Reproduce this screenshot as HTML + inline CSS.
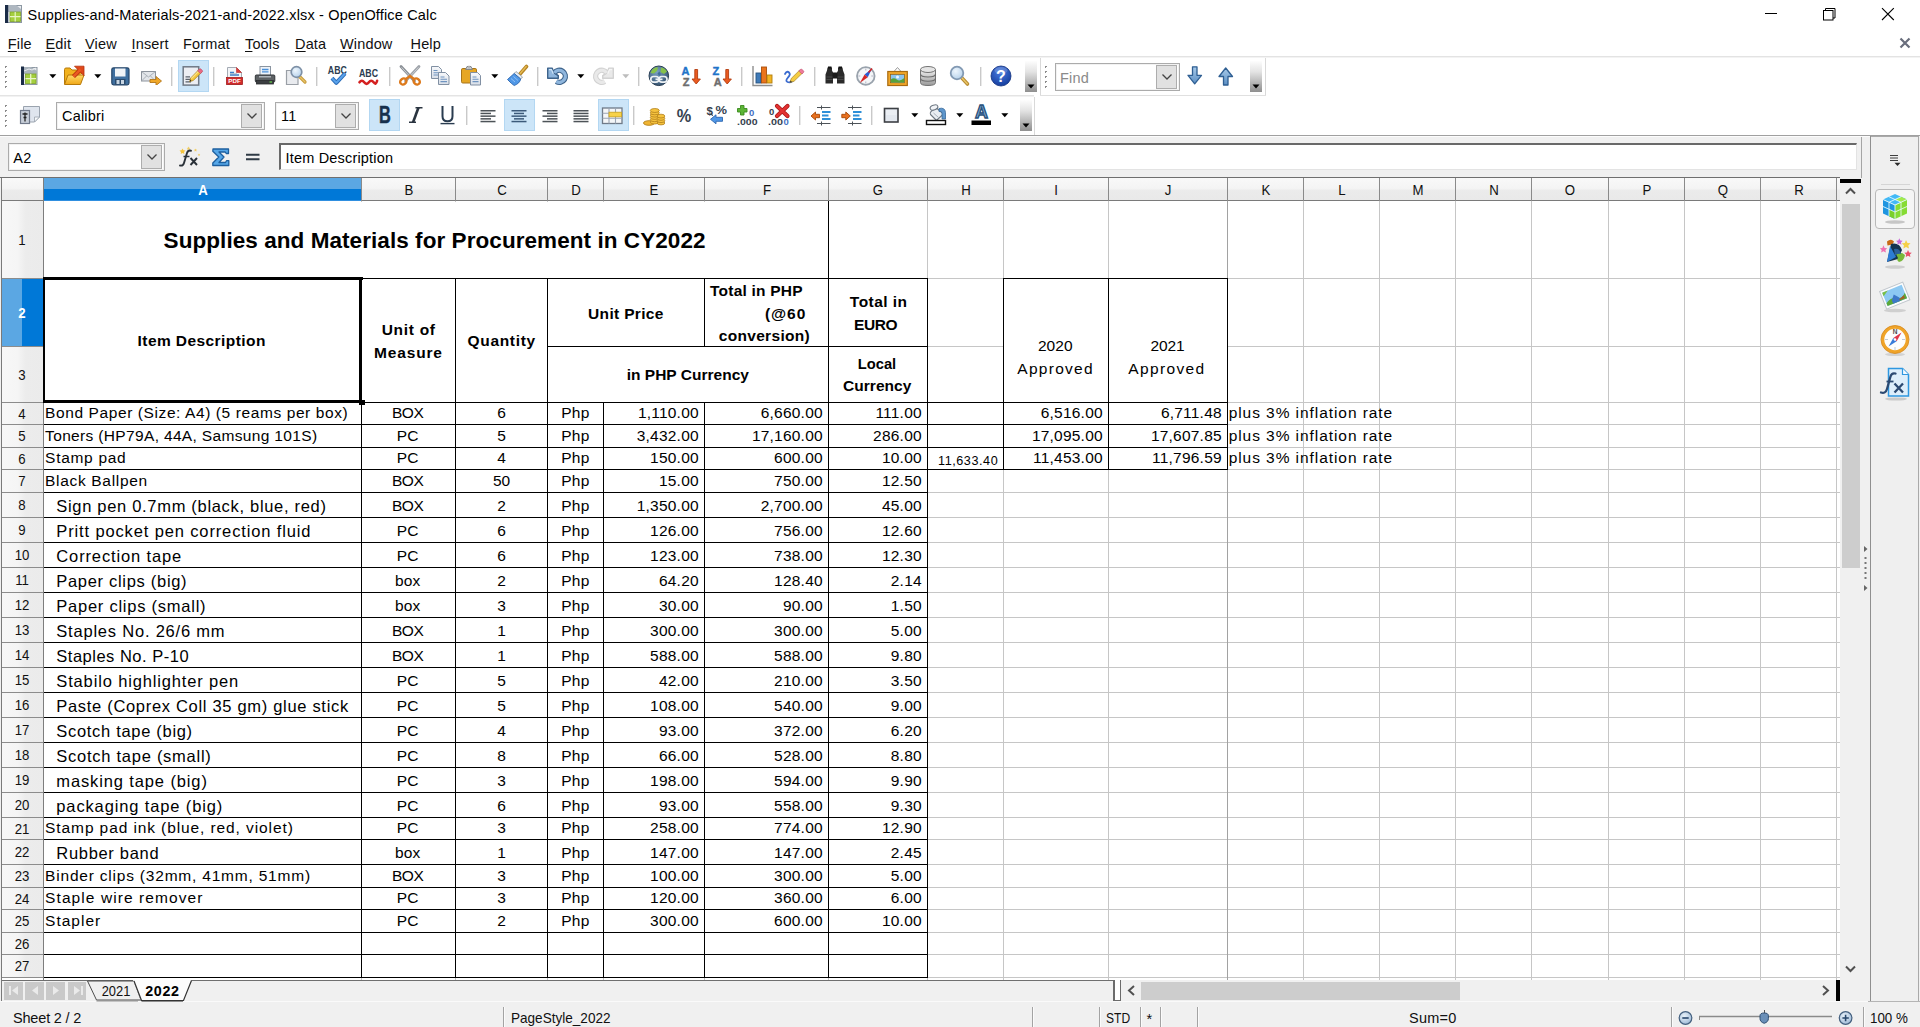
<!DOCTYPE html>
<html><head><meta charset="utf-8"><title>Supplies-and-Materials-2021-and-2022.xlsx - OpenOffice Calc</title><style>
html,body{margin:0;padding:0}
body{width:1920px;height:1027px;overflow:hidden;position:relative;background:#fff;font-family:'Liberation Sans',sans-serif}
body>div,body>svg,body>span{position:absolute}
.t{white-space:nowrap;line-height:0;height:0;display:block}
.t u{text-decoration:underline;text-underline-offset:1.5px;text-decoration-thickness:1px}
</style></head><body>
<div style="left:0px;top:0px;width:1920px;height:30px;background:#fff"></div>
<svg style="left:4px;top:4px" width="19" height="20" viewBox="0 0 19 20"><rect x="2.5" y="1.5" width="15" height="17" fill="#e9ecef" stroke="#8d98a3"/><polygon points="3,1 12,1 17,5 17,8 3,8" fill="#aeb7c0"/><rect x="1" y="1" width="3.2" height="18" fill="#1b2c47"/><rect x="6" y="8" width="10.5" height="9.5" fill="#a4cf3e" stroke="#7da02a" stroke-width=".8"/><path d="M11.2 8v9.5M6 12.7h10.5" stroke="#e9f5c8" stroke-width="1.2"/></svg>
<span class="t" style="left:27.6px;top:14.98px;font-size:14.5px;letter-spacing:0.166px;margin-right:-0.166px;">Supplies-and-Materials-2021-and-2022.xlsx - OpenOffice Calc</span>
<svg style="left:1760px;top:4px" width="140" height="22" viewBox="1760 4 140 22"><path d="M1765 13.5h12" stroke="#000" stroke-width="1"/><path d="M1825.5 10.5v-2h9.5v9.5h-2" fill="none" stroke="#000" stroke-width="1"/><rect x="1823.5" y="10.5" width="9.5" height="9.5" fill="#fff" stroke="#000" stroke-width="1"/><path d="M1882 8.2l11.8 11.8M1893.8 8.2l-11.8 11.8" stroke="#000" stroke-width="1.1"/></svg>
<span class="t" style="left:7.8px;top:43.58px;font-size:14.5px;color:#111;letter-spacing:0.15px;margin-right:-0.15px;"><u>F</u>ile</span>
<span class="t" style="left:45.5px;top:43.58px;font-size:14.5px;color:#111;letter-spacing:0.15px;margin-right:-0.15px;"><u>E</u>dit</span>
<span class="t" style="left:85px;top:43.58px;font-size:14.5px;color:#111;letter-spacing:0.15px;margin-right:-0.15px;"><u>V</u>iew</span>
<span class="t" style="left:131.5px;top:43.58px;font-size:14.5px;color:#111;letter-spacing:0.15px;margin-right:-0.15px;"><u>I</u>nsert</span>
<span class="t" style="left:183px;top:43.58px;font-size:14.5px;color:#111;letter-spacing:0.15px;margin-right:-0.15px;">F<u>o</u>rmat</span>
<span class="t" style="left:245px;top:43.58px;font-size:14.5px;color:#111;letter-spacing:0.15px;margin-right:-0.15px;"><u>T</u>ools</span>
<span class="t" style="left:295px;top:43.58px;font-size:14.5px;color:#111;letter-spacing:0.15px;margin-right:-0.15px;"><u>D</u>ata</span>
<span class="t" style="left:340px;top:43.58px;font-size:14.5px;color:#111;letter-spacing:0.15px;margin-right:-0.15px;"><u>W</u>indow</span>
<span class="t" style="left:410.5px;top:43.58px;font-size:14.5px;color:#111;letter-spacing:0.15px;margin-right:-0.15px;"><u>H</u>elp</span>
<svg style="left:1899px;top:37px" width="12" height="12" viewBox="0 0 12 12"><path d="M1.5 1.5l9 9M10.5 1.5l-9 9" stroke="#686d7c" stroke-width="2.2"/></svg>
<div style="left:0px;top:56px;width:1920px;height:1px;background:#e3e3e3"></div>
<div style="left:0px;top:57px;width:1920px;height:1px;background:#f3f3f3"></div>
<div style="left:0px;top:58px;width:1920px;height:77px;background:#fff"></div>
<div style="left:0px;top:95px;width:1034px;height:1px;background:#e4e4e4"></div>
<div style="left:0px;top:96px;width:1034px;height:1px;background:#f2f2f2"></div>
<div style="left:1040px;top:58px;width:1px;height:38px;background:#d9d9d9"></div>
<div style="left:1265px;top:58px;width:1px;height:38px;background:#d9d9d9"></div>
<div style="left:1040px;top:95px;width:226px;height:1px;background:#e0e0e0"></div>
<div style="left:1034px;top:97px;width:1px;height:38px;background:#d9d9d9"></div>
<div style="left:5px;top:66px;width:2px;height:2px;background:#8c8c8c"></div>
<div style="left:6px;top:67px;width:1px;height:1px;background:#fff"></div>
<div style="left:5px;top:71px;width:2px;height:2px;background:#8c8c8c"></div>
<div style="left:6px;top:72px;width:1px;height:1px;background:#fff"></div>
<div style="left:5px;top:76px;width:2px;height:2px;background:#8c8c8c"></div>
<div style="left:6px;top:77px;width:1px;height:1px;background:#fff"></div>
<div style="left:5px;top:81px;width:2px;height:2px;background:#8c8c8c"></div>
<div style="left:6px;top:82px;width:1px;height:1px;background:#fff"></div>
<div style="left:5px;top:86px;width:2px;height:2px;background:#8c8c8c"></div>
<div style="left:6px;top:87px;width:1px;height:1px;background:#fff"></div>
<div style="left:5px;top:105px;width:2px;height:2px;background:#8c8c8c"></div>
<div style="left:6px;top:106px;width:1px;height:1px;background:#fff"></div>
<div style="left:5px;top:110px;width:2px;height:2px;background:#8c8c8c"></div>
<div style="left:6px;top:111px;width:1px;height:1px;background:#fff"></div>
<div style="left:5px;top:115px;width:2px;height:2px;background:#8c8c8c"></div>
<div style="left:6px;top:116px;width:1px;height:1px;background:#fff"></div>
<div style="left:5px;top:120px;width:2px;height:2px;background:#8c8c8c"></div>
<div style="left:6px;top:121px;width:1px;height:1px;background:#fff"></div>
<div style="left:5px;top:125px;width:2px;height:2px;background:#8c8c8c"></div>
<div style="left:6px;top:126px;width:1px;height:1px;background:#fff"></div>
<div style="left:1045px;top:66px;width:2px;height:2px;background:#8c8c8c"></div>
<div style="left:1046px;top:67px;width:1px;height:1px;background:#fff"></div>
<div style="left:1045px;top:71px;width:2px;height:2px;background:#8c8c8c"></div>
<div style="left:1046px;top:72px;width:1px;height:1px;background:#fff"></div>
<div style="left:1045px;top:76px;width:2px;height:2px;background:#8c8c8c"></div>
<div style="left:1046px;top:77px;width:1px;height:1px;background:#fff"></div>
<div style="left:1045px;top:81px;width:2px;height:2px;background:#8c8c8c"></div>
<div style="left:1046px;top:82px;width:1px;height:1px;background:#fff"></div>
<div style="left:1045px;top:86px;width:2px;height:2px;background:#8c8c8c"></div>
<div style="left:1046px;top:87px;width:1px;height:1px;background:#fff"></div>
<div style="left:1025px;top:61px;width:12px;height:31px;background:linear-gradient(#fdfdfd 0%,#e3e3e3 35%,#a9a9a9 80%,#8f8f8f 100%)"></div>
<svg style="left:1027px;top:84px" width="8" height="5" viewBox="0 0 8 5"><polygon points="0.5,0.5 7.5,0.5 4,4.5" fill="#000"/></svg>
<div style="left:1250px;top:61px;width:12px;height:31px;background:linear-gradient(#fdfdfd 0%,#e3e3e3 35%,#a9a9a9 80%,#8f8f8f 100%)"></div>
<svg style="left:1252px;top:84px" width="8" height="5" viewBox="0 0 8 5"><polygon points="0.5,0.5 7.5,0.5 4,4.5" fill="#000"/></svg>
<div style="left:1020px;top:100px;width:12px;height:31px;background:linear-gradient(#fdfdfd 0%,#e3e3e3 35%,#a9a9a9 80%,#8f8f8f 100%)"></div>
<svg style="left:1022px;top:123px" width="8" height="5" viewBox="0 0 8 5"><polygon points="0.5,0.5 7.5,0.5 4,4.5" fill="#000"/></svg>
<div style="left:178px;top:60px;width:31px;height:32px;background:#cce5f8;border:1px solid #b3d7f2;box-sizing:border-box"></div>
<div style="left:369px;top:99px;width:31px;height:32px;background:#cce5f8;border:1px solid #b3d7f2;box-sizing:border-box"></div>
<div style="left:504px;top:99px;width:31px;height:32px;background:#cce5f8;border:1px solid #b3d7f2;box-sizing:border-box"></div>
<div style="left:598px;top:99px;width:31px;height:32px;background:#cce5f8;border:1px solid #b3d7f2;box-sizing:border-box"></div>
<div style="left:171px;top:67px;width:1px;height:19px;background:#c9c9c9"></div>
<div style="left:172px;top:67px;width:1px;height:19px;background:#e9e9e9"></div>
<div style="left:213px;top:67px;width:1px;height:19px;background:#c9c9c9"></div>
<div style="left:214px;top:67px;width:1px;height:19px;background:#e9e9e9"></div>
<div style="left:316px;top:67px;width:1px;height:19px;background:#c9c9c9"></div>
<div style="left:317px;top:67px;width:1px;height:19px;background:#e9e9e9"></div>
<div style="left:389px;top:67px;width:1px;height:19px;background:#c9c9c9"></div>
<div style="left:390px;top:67px;width:1px;height:19px;background:#e9e9e9"></div>
<div style="left:537px;top:67px;width:1px;height:19px;background:#c9c9c9"></div>
<div style="left:538px;top:67px;width:1px;height:19px;background:#e9e9e9"></div>
<div style="left:638px;top:67px;width:1px;height:19px;background:#c9c9c9"></div>
<div style="left:639px;top:67px;width:1px;height:19px;background:#e9e9e9"></div>
<div style="left:741px;top:67px;width:1px;height:19px;background:#c9c9c9"></div>
<div style="left:742px;top:67px;width:1px;height:19px;background:#e9e9e9"></div>
<div style="left:814px;top:67px;width:1px;height:19px;background:#c9c9c9"></div>
<div style="left:815px;top:67px;width:1px;height:19px;background:#e9e9e9"></div>
<div style="left:980px;top:67px;width:1px;height:19px;background:#c9c9c9"></div>
<div style="left:981px;top:67px;width:1px;height:19px;background:#e9e9e9"></div>
<div style="left:466px;top:106px;width:1px;height:19px;background:#c9c9c9"></div>
<div style="left:467px;top:106px;width:1px;height:19px;background:#e9e9e9"></div>
<div style="left:633px;top:106px;width:1px;height:19px;background:#c9c9c9"></div>
<div style="left:634px;top:106px;width:1px;height:19px;background:#e9e9e9"></div>
<div style="left:799px;top:106px;width:1px;height:19px;background:#c9c9c9"></div>
<div style="left:800px;top:106px;width:1px;height:19px;background:#e9e9e9"></div>
<div style="left:871px;top:106px;width:1px;height:19px;background:#c9c9c9"></div>
<div style="left:872px;top:106px;width:1px;height:19px;background:#e9e9e9"></div>
<div style="left:1055px;top:63px;width:125px;height:28px;background:#fff;border:1px solid #ababab;box-sizing:border-box;box-shadow:inset 0 0 0 1px #f2f2f2"></div>
<div style="left:1156px;top:65px;width:21px;height:24px;background:#e1e1e1;border:1px solid #adadad;box-sizing:border-box"></div>
<svg style="left:1160.5px;top:73.0px" width="12" height="8" viewBox="0 0 12 8"><path d="M1.5 1.5l4.5 4.5 4.5-4.5" fill="none" stroke="#444" stroke-width="1.3"/></svg>
<span class="t" style="left:1060px;top:77.98px;font-size:14.5px;color:#8a8a8a;letter-spacing:0.18px;margin-right:-0.18px;">Find</span>
<div style="left:56px;top:102px;width:209px;height:28px;background:#fff;border:1px solid #ababab;box-sizing:border-box;box-shadow:inset 0 0 0 1px #f2f2f2"></div>
<div style="left:241px;top:104px;width:21px;height:24px;background:#e1e1e1;border:1px solid #adadad;box-sizing:border-box"></div>
<svg style="left:245.5px;top:112.0px" width="12" height="8" viewBox="0 0 12 8"><path d="M1.5 1.5l4.5 4.5 4.5-4.5" fill="none" stroke="#444" stroke-width="1.3"/></svg>
<span class="t" style="left:62px;top:116.28px;font-size:14.5px;letter-spacing:0.18px;margin-right:-0.18px;">Calibri</span>
<div style="left:275px;top:102px;width:84px;height:28px;background:#fff;border:1px solid #ababab;box-sizing:border-box;box-shadow:inset 0 0 0 1px #f2f2f2"></div>
<div style="left:335px;top:104px;width:21px;height:24px;background:#e1e1e1;border:1px solid #adadad;box-sizing:border-box"></div>
<svg style="left:339.5px;top:112.0px" width="12" height="8" viewBox="0 0 12 8"><path d="M1.5 1.5l4.5 4.5 4.5-4.5" fill="none" stroke="#444" stroke-width="1.3"/></svg>
<span class="t" style="left:281px;top:116.28px;font-size:14.5px;letter-spacing:0.18px;margin-right:-0.18px;">11</span>
<svg style="left:0;top:0" width="0" height="0"><defs><linearGradient id="gFold" x1="0" y1="0" x2="0" y2="1"><stop offset="0" stop-color="#ffd968"/><stop offset="1" stop-color="#f0a818"/></linearGradient><linearGradient id="gBlue" x1="0" y1="0" x2="0" y2="1"><stop offset="0" stop-color="#a9cbea"/><stop offset="1" stop-color="#5b8fc4"/></linearGradient><linearGradient id="gPaper" x1="0" y1="0" x2="0" y2="1"><stop offset="0" stop-color="#f6f8fb"/><stop offset="1" stop-color="#d9dfe8"/></linearGradient><linearGradient id="gGray" x1="0" y1="0" x2="0" y2="1"><stop offset="0" stop-color="#f0f0f0"/><stop offset="1" stop-color="#9a9a9a"/></linearGradient><radialGradient id="gHelp" cx=".45" cy=".3" r=".75"><stop offset="0" stop-color="#4a7be0"/><stop offset="1" stop-color="#123a9a"/></radialGradient><radialGradient id="gGlobe" cx=".4" cy=".3" r=".8"><stop offset="0" stop-color="#7aa0c4"/><stop offset="1" stop-color="#2d4a66"/></radialGradient><radialGradient id="gLens" cx=".4" cy=".35" r=".7"><stop offset="0" stop-color="#eef6fd"/><stop offset="1" stop-color="#b4d0ea"/></radialGradient></defs></svg>
<svg style="left:20px;top:65px" width="19" height="21" viewBox="0 0 19 21"><rect x="2.5" y="2.5" width="14.5" height="17" fill="#e9ecef" stroke="#8d98a3"/><polygon points="3,2 11,2 17,6 17,9 3,9" fill="#aab4bd"/><path d="M4 6l5-2 3 1 4-2" stroke="#e9ecef" stroke-width="1" fill="none"/><rect x="1" y="1.5" width="3" height="18.5" fill="#1b2c47"/><rect x="5.5" y="9" width="10.5" height="9.5" fill="#a4cf3e" stroke="#7da02a" stroke-width=".8"/><path d="M10.7 9v9.5M5.5 13.7h10.5" stroke="#e9f5c8" stroke-width="1.3"/></svg>
<svg style="left:48.5px;top:74px" width="8" height="5" viewBox="0 0 8 5"><polygon points="0.3,0.3 7.3,0.3 3.8,4.2" fill="#000"/></svg>
<svg style="left:63px;top:65px" width="22" height="21" viewBox="0 0 22 21"><path d="M1.5 19V4.5q0-1.5 1.5-1.5h4l2 2h8q1.5 0 1.5 1.5V9" fill="#f2b21e" stroke="#b77a0a"/><path d="M1.5 19.5L5 10h16l-3.5 9.5z" fill="url(#gFold)" stroke="#b77a0a"/><path d="M10.500 11.500l7-7" stroke="#b5300c" stroke-width="4.200"/><polygon points="11.500,1.200 21,1.200 21,10.700" fill="#e0481a" stroke="#b5300c" stroke-width=".8" stroke-linejoin="round"/><path d="M10.500 11.500l7-7" stroke="#ea5a22" stroke-width="2.600"/></svg>
<svg style="left:93.5px;top:74px" width="8" height="5" viewBox="0 0 8 5"><polygon points="0.3,0.3 7.3,0.3 3.8,4.2" fill="#000"/></svg>
<svg style="left:111px;top:67px" width="19" height="19" viewBox="0 0 19 19"><rect x="0.8" y="0.8" width="17.2" height="17" rx="1.8" fill="#3f6f9f" stroke="#27476a" stroke-width="1.2"/><rect x="4" y="1.5" width="10.5" height="8" fill="#f1f4f7"/><rect x="4" y="12" width="10.5" height="5.5" fill="#2b4a6b"/><rect x="5.5" y="13" width="3" height="4" fill="#c9d6e3"/><rect x="10" y="13" width="3" height="4" fill="#c9d6e3"/></svg>
<svg style="left:140px;top:70px" width="23" height="15" viewBox="0 0 23 15"><rect x="1.5" y="1.5" width="14" height="9.5" fill="#e3e6ea" stroke="#8c939c"/><path d="M1.5 1.5l7 5.5 7-5.5M1.5 11l5-5M15.500 11l-5-5" fill="none" stroke="#a3a9b1" stroke-width=".9"/><path d="M10 9.5h6V6.5l5.5 4.5-5.500 4.5v-3h-6z" fill="#f0a828" stroke="#b3761a" stroke-width=".9"/></svg>
<svg style="left:182px;top:65px" width="23" height="22" viewBox="0 0 23 22"><rect x="1.200" y="1.800" width="15.500" height="18.300" fill="#eceef3" stroke="#707985" stroke-width="1.500"/><path d="M3.500 11.800h4.500M3.500 14.300h6.500M3.500 16.800h5.500" stroke="#59616c" stroke-width="1.300"/><g transform="translate(-.5,1.800)"><path d="M8.200 14.800l1-3.600L17.600 2.600l2.700 2.600-8.500 8.500z" fill="#f5c63a" stroke="#a8842a" stroke-width=".8"/><path d="M9.800 11.800l8.300-8.300" stroke="#fbe38a" stroke-width="1.200"/><path d="M16.200 4l1.600-1.700q.8-.8 1.700 0l1.200 1.200q.8.900 0 1.700L19 6.800z" fill="#ea6a86" stroke="#b84860" stroke-width=".6"/><path d="M8.200 14.800l.5-1.800 1.300 1.300z" fill="#222"/></g></svg>
<svg style="left:225px;top:66px" width="19" height="20" viewBox="0 0 19 20"><path d="M2.500 1.500h9l5 5v12h-14z" fill="#f2f4f7" stroke="#a4abb4"/><path d="M11.500 1.500v5h5z" fill="#dd3b3b" stroke="#b52a2a" stroke-width=".6"/><path d="M5 6.500h4M5 9h9" stroke="#3d7fc9" stroke-width="1.4"/><path d="M5 7.800h7" stroke="#9ab" stroke-width=".8"/><rect x="1.500" y="11.500" width="16" height="7" fill="#d22b2b" stroke="#a51f1f" stroke-width=".8"/><text x="9.500" y="17.300" text-anchor="middle" font-size="6.200" font-weight="700" fill="#fff" style="font-family:'Liberation Sans',sans-serif">PDF</text></svg>
<svg style="left:254px;top:65px" width="22" height="21" viewBox="0 0 22 21"><rect x="6" y="1.500" width="10.500" height="9" fill="#eef3f9" stroke="#8a94a0"/><path d="M8 4.500h6.500M8 6.800h6.500" stroke="#4a90d9" stroke-width="1.300"/><rect x="1.300" y="10" width="19.500" height="7" rx="1" fill="#5d6164" stroke="#33373a"/><rect x="2.500" y="15.500" width="17" height="3.500" fill="#3b3e41" stroke="#2b2d2f" stroke-width=".8"/><rect x="5" y="11" width="12" height="1.500" fill="#aeb3b8"/><rect x="15.500" y="16.300" width="2.500" height="1.400" fill="#63c04a"/></svg>
<svg style="left:285px;top:65px" width="23" height="21" viewBox="0 0 23 21"><path d="M1.500 5.500h8l3.500 0v14h-11.500z" fill="#e9ebef" stroke="#9a9fa6" stroke-width="1.200"/><path d="M14.500 11.500l5.500 5.500" stroke="#c79a3a" stroke-width="3.200" stroke-linecap="round"/><path d="M14.500 11.500l5.500 5.500" stroke="#e8c56a" stroke-width="1.200" stroke-linecap="round"/><circle cx="11.500" cy="7" r="5.300" fill="url(#gLens)" stroke="#7d90a6" stroke-width="1.700"/></svg>
<svg style="left:326px;top:64px" width="23" height="23" viewBox="0 0 23 23"><text x="11.300" y="10.300" text-anchor="middle" font-size="10" font-weight="700" fill="#2b3c50" style="font-family:'Liberation Sans',sans-serif" textLength="19" lengthAdjust="spacingAndGlyphs">ABC</text><path d="M6 14.200l4.300 4.600 8.700-9.300" fill="none" stroke="#2a6cb8" stroke-width="4" stroke-linejoin="round"/><path d="M6 14.200l4.300 4.600 8.700-9.300" fill="none" stroke="#5aa2ea" stroke-width="2" stroke-linejoin="round"/></svg>
<svg style="left:357px;top:64px" width="23" height="23" viewBox="0 0 23 23"><text x="11.500" y="12.800" text-anchor="middle" font-size="10" font-weight="700" fill="#2b3c50" style="font-family:'Liberation Sans',sans-serif" textLength="19" lengthAdjust="spacingAndGlyphs">ABC</text><path d="M2.500 18.300q2.300-3.200 4.700 0t4.700 0 4.700 0 3.500-1.500" fill="none" stroke="#d42020" stroke-width="2.600" stroke-linecap="round"/></svg>
<svg style="left:398px;top:64px" width="24" height="24" viewBox="0 0 24 24"><path d="M3 2.500L16.500 17" stroke="#8b9096" stroke-width="2.800" stroke-linecap="round"/><path d="M21 2.500L7.500 17" stroke="#9ea3a9" stroke-width="2.800" stroke-linecap="round"/><path d="M3.500 3.300L12 12.500M20.500 3.300L12 12.500" stroke="#c8ccd0" stroke-width="1"/><ellipse cx="5.300" cy="17.500" rx="3.300" ry="2.800" fill="none" stroke="#dd7a1c" stroke-width="2.400" transform="rotate(-35 5.300 17.500)"/><ellipse cx="18.700" cy="17.500" rx="3.300" ry="2.800" fill="none" stroke="#dd7a1c" stroke-width="2.400" transform="rotate(35 18.700 17.500)"/><path d="M8 15l4-3 4 3" fill="none" stroke="#dd7a1c" stroke-width="2.400"/></svg>
<svg style="left:430px;top:65px" width="21" height="21" viewBox="0 0 21 21"><path d="M1.500 1.500h7l3 3v9h-10z" fill="url(#gPaper)" stroke="#8190a3"/><path d="M3.500 5.500h4M3.500 7.800h6M3.500 10h6" stroke="#6f94c0" stroke-width="1.100"/><path d="M8.500 7.500h7l3.500 3.500v8.500h-10.500z" fill="url(#gPaper)" stroke="#8190a3"/><path d="M10.500 12h4M10.500 14.300h6.500M10.500 16.600h6.500" stroke="#6f94c0" stroke-width="1.100"/></svg>
<svg style="left:460px;top:64px" width="23" height="23" viewBox="0 0 23 23"><rect x="1.500" y="4.500" width="15" height="14.500" rx="1.300" fill="#e6a624" stroke="#a8751a"/><path d="M5.500 5.500l1.500-3h4l1.500 3z" fill="#c9ccd0" stroke="#7d8288" stroke-width=".9"/><circle cx="9" cy="3" r="1" fill="#f4f4f4" stroke="#777" stroke-width=".5"/><path d="M10.500 8.500h7l3 3v9.500h-10z" fill="url(#gPaper)" stroke="#8190a3"/><path d="M12.500 13h4M12.500 15.300h6M12.500 17.600h6" stroke="#6f94c0" stroke-width="1.100"/></svg>
<svg style="left:490.7px;top:74px" width="8" height="5" viewBox="0 0 8 5"><polygon points="0.3,0.3 7.3,0.3 3.8,4.2" fill="#000"/></svg>
<svg style="left:506px;top:64px" width="24" height="24" viewBox="0 0 24 24"><path d="M20.500 2.500l-6.500 7.500" stroke="#b78524" stroke-width="3.600" stroke-linecap="round"/><path d="M20.200 2.500l-6 7" stroke="#e6bc55" stroke-width="1.300" stroke-linecap="round"/><path d="M10 7.500l6.500 5.500-1.800 2-6.500-5.500z" fill="#e8ecf0" stroke="#8a949e" stroke-width=".8"/><path d="M8.200 9.500l6.500 5.500q-1 4.500-6.500 6.500-2.500-1.500-6.700-6z" fill="#4f97e6" stroke="#2c66b0" stroke-width=".9"/><path d="M5 14.500l4 3.500M7.500 12.500l4.500 4" stroke="#8fc0f5" stroke-width="1"/></svg>
<svg style="left:546px;top:65px" width="23" height="22" viewBox="0 0 23 22"><g><path d="M8.400 7.900A6 6 0 1 1 10.300 16.500" fill="none" stroke="#3d638b" stroke-width="5.400"/><polygon points="1.700,3.100 6.100,3.100 8.300,8.200 12.300,10.700 12.300,13.300 1.700,13.300" fill="#8fb6dd" stroke="#3d638b" stroke-width="1.400" stroke-linejoin="round"/><path d="M8.400 7.900A6 6 0 1 1 10.300 16.500" fill="none" stroke="#8fb6dd" stroke-width="3.300"/><path d="M9.500 9l2.800 1.700v2.600" fill="none" stroke="#3d638b" stroke-width="1"/><path d="M3 4.600l2.500 0 1.800 4.200" fill="none" stroke="#cfe4f7" stroke-width="1.200"/></g></svg>
<svg style="left:577px;top:74px" width="8" height="5" viewBox="0 0 8 5"><polygon points="0.3,0.3 7.3,0.3 3.8,4.2" fill="#000"/></svg>
<svg style="left:591.5px;top:65px" width="23" height="22" viewBox="0 0 23 22"><g transform="translate(23,0) scale(-1,1)"><path d="M8.400 7.900A6 6 0 1 1 10.300 16.500" fill="none" stroke="#d2d2d2" stroke-width="5.400"/><polygon points="1.700,3.100 6.100,3.100 8.300,8.200 12.300,10.700 12.300,13.300 1.700,13.300" fill="#e9e9e9" stroke="#d2d2d2" stroke-width="1.400" stroke-linejoin="round"/><path d="M8.400 7.900A6 6 0 1 1 10.300 16.500" fill="none" stroke="#e9e9e9" stroke-width="3.300"/><path d="M9.500 9l2.800 1.700v2.600" fill="none" stroke="#d2d2d2" stroke-width="1"/><path d="M3 4.600l2.500 0 1.800 4.200" fill="none" stroke="#f6f6f6" stroke-width="1.200"/></g></svg>
<svg style="left:622px;top:74px" width="8" height="5" viewBox="0 0 8 5"><polygon points="0.3,0.3 7.3,0.3 3.8,4.2" fill="#bdbdbd"/></svg>
<svg style="left:647px;top:64px" width="24" height="24" viewBox="0 0 24 24"><circle cx="11.800" cy="11.800" r="9.800" fill="url(#gGlobe)" stroke="#2a3f55" stroke-width="1"/><path d="M5 6q3-3.500 6-2.500l-1 3.500-3 2.500-3.500-.5zM14 3.500q4 .5 6 4l-3 2.500-3.500-2z" fill="#86c24a"/><path d="M10.500 9.500l1.800-2 1.500 2.500-1.500 2.200z" fill="#3f6e9a"/><rect x="3.800" y="12.500" width="8" height="5.600" rx="2.800" fill="none" stroke="#eef2f5" stroke-width="1.700"/><rect x="12" y="12.500" width="8" height="5.600" rx="2.800" fill="none" stroke="#eef2f5" stroke-width="1.700"/><path d="M8.500 15.300h7" stroke="#eef2f5" stroke-width="1.700"/></svg>
<svg style="left:680.5px;top:64px" width="21" height="24" viewBox="0 0 21 24"><text x="0.500" y="10.500" font-size="11" font-weight="700" fill="#1f74c9" stroke="#1f74c9" stroke-width=".4" style="font-family:'Liberation Sans',sans-serif">A</text><text x="1.800" y="21.800" font-size="11" font-weight="700" fill="#6e6e6e" stroke="#6e6e6e" stroke-width=".4" style="font-family:'Liberation Sans',sans-serif">Z</text><path d="M13.800 5.500v9.500h-2.800l4.200 5 4.200-5h-2.800v-9.500z" fill="#ea5a20" stroke="#b23c0e" stroke-width=".9" stroke-linejoin="round"/></svg>
<svg style="left:711.8px;top:64px" width="21" height="24" viewBox="0 0 21 24"><text x="0.500" y="10.500" font-size="11" font-weight="700" fill="#1f74c9" stroke="#1f74c9" stroke-width=".4" style="font-family:'Liberation Sans',sans-serif">Z</text><text x="1.800" y="21.800" font-size="11" font-weight="700" fill="#6e6e6e" stroke="#6e6e6e" stroke-width=".4" style="font-family:'Liberation Sans',sans-serif">A</text><path d="M13.800 5.500v9.500h-2.800l4.200 5 4.200-5h-2.800v-9.500z" fill="#ea5a20" stroke="#b23c0e" stroke-width=".9" stroke-linejoin="round"/></svg>
<svg style="left:751px;top:64px" width="24" height="24" viewBox="0 0 24 24"><path d="M2 2v19.500h19.500" fill="none" stroke="#8e8e8e" stroke-width="1.400"/><rect x="5" y="9" width="5" height="10" fill="#3f7ab8" stroke="#27527f" stroke-width=".9"/><rect x="10.500" y="3" width="5" height="16" fill="#ea741c" stroke="#a94f0d" stroke-width=".9"/><rect x="16" y="11" width="5" height="8" fill="#f2b422" stroke="#b27d0d" stroke-width=".9"/></svg>
<svg style="left:782px;top:66px" width="24" height="20" viewBox="0 0 24 20"><path d="M3 8q2-3.500 4-1.500t-1 5q-3 3.500-.5 4.500t5-1" fill="none" stroke="#3a6bd0" stroke-width="1.800" stroke-linecap="round"/><path d="M8 16.500l1.200-4L17.500 4.300l3 2.700-8.500 8.300z" fill="#f5cc42" stroke="#a8842a" stroke-width=".7"/><path d="M16.800 5l1.500-1.500q.8-.8 1.700 0l1.500 1.300q.8.900 0 1.700l-1.500 1.500z" fill="#ee7a9a" stroke="#c0506e" stroke-width=".6"/><path d="M8 16.500l.5-2 1.500 1.400z" fill="#333"/></svg>
<svg style="left:824px;top:65px" width="22" height="22" viewBox="0 0 22 22"><path d="M3.500 2.500h4.500v3l1 2v11h-7.500v-9l1.500-4z" fill="#2a2a2a"/><path d="M18.500 2.500h-4.500v3l-1 2v11h7.500v-9l-1.500-4z" fill="#2a2a2a"/><rect x="8.500" y="7.500" width="5" height="6" fill="#1b1b1b"/><rect x="4" y="1.500" width="3.500" height="2" fill="#111"/><rect x="14.500" y="1.500" width="3.500" height="2" fill="#111"/><path d="M2.500 12h6M13.500 12h6M2.500 14.500h6M13.500 14.500h6" stroke="#555" stroke-width=".7"/></svg>
<svg style="left:855px;top:64px" width="23" height="24" viewBox="0 0 23 24"><circle cx="10.800" cy="12" r="8.800" fill="#f4f6f8" stroke="#9aa3ad" stroke-width="1.800"/><path d="M10.800 4.500v2M10.800 17.500v2M3.300 12h2M16.300 12h2" stroke="#aab" stroke-width=".9"/><path d="M17 4.500l-4.200 8.800-3.200-2.800z" fill="#2a5bd0"/><path d="M4.800 19l4.800-8.500 3.200 2.800z" fill="#d62626"/><path d="M17 4.500l-3.500 4" stroke="#d62626" stroke-width="1.500"/></svg>
<svg style="left:886px;top:65px" width="23" height="22" viewBox="0 0 23 22"><path d="M8 6.500l3.500-4 3.500 4" fill="none" stroke="#9a9a9a" stroke-width="1"/><rect x="1.800" y="6.500" width="19.500" height="14" fill="#f2a82a" stroke="#a86a10" stroke-width="1.200"/><rect x="4.500" y="9.300" width="14" height="8.500" fill="#8cc4ee" stroke="#8a5a10" stroke-width=".7"/><path d="M4.800 17.500v-3q3-2.500 6 0t7.500-1.500v4.500z" fill="#57a23a"/><circle cx="11.500" cy="12" r="1.500" fill="#eef7ff"/></svg>
<svg style="left:919px;top:65px" width="18" height="22" viewBox="0 0 18 22"><path d="M1.500 4.500v13q0 3 7.500 3t7.500-3v-13" fill="url(#gGray)" stroke="#737373"/><ellipse cx="9" cy="4.500" rx="7.500" ry="3" fill="#e4e4e4" stroke="#737373"/><path d="M1.500 9q0 3 7.500 3t7.500-3M1.500 13.300q0 3 7.500 3t7.500-3" fill="none" stroke="#6d6d6d" stroke-width="1.100"/></svg>
<svg style="left:948px;top:64px" width="23" height="24" viewBox="0 0 23 24"><path d="M13.500 13.500l6 6.500" stroke="#b98d34" stroke-width="3.600" stroke-linecap="round"/><path d="M13.800 13.800l5.500 6" stroke="#ecc868" stroke-width="1.300" stroke-linecap="round"/><circle cx="9" cy="9" r="6.300" fill="url(#gLens)" stroke="#8299b3" stroke-width="1.800"/></svg>
<svg style="left:990px;top:65px" width="22" height="22" viewBox="0 0 22 22"><circle cx="11" cy="11" r="10" fill="url(#gHelp)" stroke="#0f2f7d" stroke-width=".8"/><ellipse cx="11" cy="5.500" rx="6.500" ry="3.500" fill="#fff" opacity=".18"/><text x="11" y="16.600" text-anchor="middle" font-size="16" font-weight="700" fill="#fff" style="font-family:'Liberation Sans',sans-serif">?</text></svg>
<svg style="left:1186px;top:65px" width="18" height="22" viewBox="0 0 18 22"><path d="M6.500 1.800h4.500v8.500h4.500l-6.800 8.500-6.700-8.500h4.500z" fill="url(#gBlue)" stroke="#2f5f93" stroke-width="1.300" stroke-linejoin="round"/></svg>
<svg style="left:1217px;top:65px" width="18" height="22" viewBox="0 0 18 22"><path d="M6.500 20h4.500v-8.500h4.500l-6.800-8.500-6.700 8.500h4.500z" fill="url(#gBlue)" stroke="#2f5f93" stroke-width="1.300" stroke-linejoin="round"/></svg>
<svg style="left:19px;top:104px" width="23" height="22" viewBox="0 0 23 22"><path d="M4.500 2.500h16v10.500l-5 5h-11z" fill="#dfe5ee" stroke="#9aa3ae"/><path d="M20.500 13h-5v5z" fill="#f7f9fb" stroke="#9aa3ae" stroke-width=".8"/><rect x="1.500" y="6.500" width="9" height="13" fill="#c7ced8" stroke="#70798a" stroke-width="1.200"/><path d="M3.500 10h5M6 8.500v9M4.500 13.500h3" stroke="#222" stroke-width="1.300"/></svg>
<svg style="left:376px;top:104px" width="18" height="22" viewBox="0 0 18 22"><text x="8.800" y="19" text-anchor="middle" font-size="23.300" font-weight="700" fill="#17304d" stroke="#17304d" stroke-width=".5" style="font-family:'Liberation Sans',sans-serif" textLength="11.800" lengthAdjust="spacingAndGlyphs">B</text></svg>
<svg style="left:406px;top:104px" width="18" height="22" viewBox="0 0 18 22"><path d="M12.500 3.500L7 18.500" stroke="#2a3440" stroke-width="2.600"/><path d="M9.500 3.700h7M3 18.300h7" stroke="#2a3440" stroke-width="1.500"/></svg>
<svg style="left:438px;top:104px" width="19" height="22" viewBox="0 0 19 22"><path d="M4.500 2v10.300q0 5 5 5t5-5V2" fill="none" stroke="#2a3c50" stroke-width="2"/><path d="M2.500 19.600h14" stroke="#2a3c50" stroke-width="1.400"/></svg>
<svg style="left:479.5px;top:109px" width="17" height="14" viewBox="0 0 17 14"><rect x="0.5" y="1.00" width="15.0" height="1.500" fill="#4d5358"/><rect x="0.5" y="3.70" width="10.5" height="1.500" fill="#4d5358"/><rect x="0.5" y="6.40" width="15.0" height="1.500" fill="#4d5358"/><rect x="0.5" y="9.10" width="10.5" height="1.500" fill="#4d5358"/><rect x="0.5" y="11.80" width="15.0" height="1.500" fill="#4d5358"/></svg>
<svg style="left:510.5px;top:109px" width="17" height="14" viewBox="0 0 17 14"><rect x="0.5" y="1.00" width="15.0" height="1.500" fill="#3c5a7a"/><rect x="3" y="3.70" width="10" height="1.500" fill="#3c5a7a"/><rect x="0.5" y="6.40" width="15.0" height="1.500" fill="#3c5a7a"/><rect x="3" y="9.10" width="10" height="1.500" fill="#3c5a7a"/><rect x="0.5" y="11.80" width="15.0" height="1.500" fill="#3c5a7a"/></svg>
<svg style="left:541.8px;top:109px" width="17" height="14" viewBox="0 0 17 14"><rect x="0.5" y="1.00" width="15.0" height="1.500" fill="#4d5358"/><rect x="5" y="3.70" width="10.5" height="1.500" fill="#4d5358"/><rect x="0.5" y="6.40" width="15.0" height="1.500" fill="#4d5358"/><rect x="5" y="9.10" width="10.5" height="1.500" fill="#4d5358"/><rect x="0.5" y="11.80" width="15.0" height="1.500" fill="#4d5358"/></svg>
<svg style="left:573px;top:109px" width="17" height="14" viewBox="0 0 17 14"><rect x="0.5" y="1.00" width="15.0" height="1.500" fill="#4d5358"/><rect x="0.5" y="3.70" width="15.0" height="1.500" fill="#4d5358"/><rect x="0.5" y="6.40" width="15.0" height="1.500" fill="#4d5358"/><rect x="0.5" y="9.10" width="15.0" height="1.500" fill="#4d5358"/><rect x="0.5" y="11.80" width="15.0" height="1.500" fill="#4d5358"/></svg>
<svg style="left:601px;top:106px" width="23" height="20" viewBox="0 0 23 20"><rect x="1.500" y="2" width="19.500" height="15.500" fill="#f4f6f8" stroke="#6f7a88" stroke-width="1.300"/><path d="M1.500 7.200h19.500M1.500 12.300h19.500M8 2v15.500M14.500 2v15.500" stroke="#9aa5b3" stroke-width="1.100"/><rect x="8" y="6.200" width="12.500" height="4.600" fill="#f7d24a" stroke="#caa21e" stroke-width=".8"/></svg>
<svg style="left:642px;top:104px" width="24" height="23" viewBox="0 0 24 23"><ellipse cx="7" cy="19" rx="5.500" ry="2.300" fill="#f0b432" stroke="#b3801a" stroke-width=".9"/><ellipse cx="12.800" cy="18.0" rx="4.500" ry="2" fill="#f5c23e" stroke="#b3801a" stroke-width=".8"/><ellipse cx="12.800" cy="15.7" rx="4.500" ry="2" fill="#f5c23e" stroke="#b3801a" stroke-width=".8"/><ellipse cx="12.800" cy="13.4" rx="4.500" ry="2" fill="#f5c23e" stroke="#b3801a" stroke-width=".8"/><ellipse cx="12.800" cy="11.1" rx="4.500" ry="2" fill="#f5c23e" stroke="#b3801a" stroke-width=".8"/><ellipse cx="12.800" cy="8.8" rx="4.500" ry="2" fill="#f5c23e" stroke="#b3801a" stroke-width=".8"/><ellipse cx="12.800" cy="6.5" rx="4.500" ry="2" fill="#f5c23e" stroke="#b3801a" stroke-width=".8"/><ellipse cx="19" cy="19.0" rx="3.800" ry="1.900" fill="#f5c23e" stroke="#b3801a" stroke-width=".8"/><ellipse cx="19" cy="16.7" rx="3.800" ry="1.900" fill="#f5c23e" stroke="#b3801a" stroke-width=".8"/><ellipse cx="19" cy="14.4" rx="3.800" ry="1.900" fill="#f5c23e" stroke="#b3801a" stroke-width=".8"/><ellipse cx="19" cy="12.1" rx="3.800" ry="1.900" fill="#f5c23e" stroke="#b3801a" stroke-width=".8"/></svg>
<svg style="left:675px;top:104px" width="18" height="22" viewBox="0 0 18 22"><text x="9" y="18" text-anchor="middle" font-size="18.500" font-weight="700" fill="#36424f" style="font-family:'Liberation Sans',sans-serif" textLength="14.500" lengthAdjust="spacingAndGlyphs">%</text></svg>
<svg style="left:705.5px;top:103px" width="24" height="24" viewBox="0 0 24 24"><text x="0.500" y="11.500" font-size="11.500" font-weight="700" fill="#36424f" style="font-family:'Liberation Sans',sans-serif">$</text><text x="9.500" y="11" font-size="11" font-weight="700" fill="#36424f" style="font-family:'Liberation Sans',sans-serif" textLength="11.500" lengthAdjust="spacingAndGlyphs">%</text><path d="M5 10.500q1 2 2 2" stroke="#36424f" stroke-width="1.200" fill="none"/><path d="M16.500 14.300h-6.500v-2.500l-5.500 4.500 5.500 4.500v-2.500h6.500z" fill="#4f97e6" stroke="#2c66b0" stroke-width=".9" stroke-linejoin="round"/></svg>
<svg style="left:736.2px;top:103px" width="24" height="24" viewBox="0 0 24 24"><path d="M4.500 2.500h3.500v3h3v3.500h-3v3h-3.500v-3h-3v-3.500h3z" fill="#5cb536" stroke="#3a8a1e" stroke-width=".9"/><text x="13" y="12.500" font-size="9.500" font-weight="700" fill="#3f6fc4" style="font-family:'Liberation Sans',sans-serif">0</text><text x="1" y="22" font-size="9.500" font-weight="700" fill="#36424f" style="font-family:'Liberation Sans',sans-serif" textLength="20.500" lengthAdjust="spacingAndGlyphs">.000</text></svg>
<svg style="left:767px;top:103px" width="24" height="24" viewBox="0 0 24 24"><text x="2" y="11.500" font-size="9.500" font-weight="700" fill="#36424f" style="font-family:'Liberation Sans',sans-serif">0</text><text x="1" y="22" font-size="9.500" font-weight="700" fill="#36424f" style="font-family:'Liberation Sans',sans-serif" textLength="15" lengthAdjust="spacingAndGlyphs">.00</text><text x="16.500" y="22" font-size="9.500" font-weight="700" fill="#3f6fc4" style="font-family:'Liberation Sans',sans-serif">0</text><path d="M10 3l10.500 10M20.500 3L10 13" stroke="#a81616" stroke-width="4.200" stroke-linecap="round"/><path d="M10 3l10.500 10M20.500 3L10 13" stroke="#e33232" stroke-width="2.600" stroke-linecap="round"/></svg>
<svg style="left:809.5px;top:105px" width="22" height="22" viewBox="0 0 22 22"><path d="M7 2.500h13.500M7 18.500h13.500" stroke="#4d5358" stroke-width="1.200"/><path d="M11.500 0.500v4M11.500 16.500v4" stroke="#4d5358" stroke-width="1"/><path d="M12 7h8.500M12 10.500h6.500M12 14h8.500" stroke="#2e8fd8" stroke-width="1.800"/><path d="M9.500 9.300h-4v-2.300l-4.500 4 4.500 4v-2.300h4z" fill="#e8701e" stroke="#a84808" stroke-width=".9" stroke-linejoin="round"/></svg>
<svg style="left:840.5px;top:105px" width="22" height="22" viewBox="0 0 22 22"><path d="M7 2.500h13.500M7 18.500h13.500" stroke="#4d5358" stroke-width="1.200"/><path d="M11.500 0.500v4M11.500 16.500v4" stroke="#4d5358" stroke-width="1"/><path d="M12 7h8.500M12 10.500h6.500M12 14h8.500" stroke="#2e8fd8" stroke-width="1.800"/><path d="M0.800 9.300h4v-2.300l4.500 4-4.500 4v-2.300h-4z" fill="#e8701e" stroke="#a84808" stroke-width=".9" stroke-linejoin="round"/></svg>
<svg style="left:883px;top:107px" width="17" height="17" viewBox="0 0 17 17"><rect x="1.500" y="1.500" width="13.500" height="13.500" fill="#e3e8ef" stroke="#3c3f44" stroke-width="1.600"/><rect x="3" y="3" width="10.500" height="5" fill="#eef2f7" opacity=".7"/></svg>
<svg style="left:910.8px;top:113px" width="8" height="5" viewBox="0 0 8 5"><polygon points="0.3,0.3 7.3,0.3 3.8,4.2" fill="#000"/></svg>
<svg style="left:925px;top:103px" width="23" height="24" viewBox="0 0 23 24"><path d="M6 8.500l5-4 7.500 6.500-6 5.500q-1 1-2 0l-5-5q-1-1 .5-3z" fill="#e9edf2" stroke="#6d7782" stroke-width="1.100"/><ellipse cx="9" cy="4.500" rx="4" ry="2.300" fill="#f2f4f7" stroke="#6d7782" stroke-width="1.100" transform="rotate(-20 9 4.500)"/><path d="M14 5.500q6-1.500 6.500 4v6.500h-3.500v-6q0-2-3-1.500z" fill="#5e96cc" stroke="#39699a" stroke-width=".8"/><path d="M8.500 10l5 4.500" stroke="#aab3bd" stroke-width="1"/><rect x="1.500" y="17.500" width="19" height="4" fill="#fff" stroke="#111" stroke-width="1.400"/></svg>
<svg style="left:955.8px;top:113px" width="8" height="5" viewBox="0 0 8 5"><polygon points="0.3,0.3 7.3,0.3 3.8,4.2" fill="#000"/></svg>
<svg style="left:970px;top:103px" width="23" height="24" viewBox="0 0 23 24"><text x="11.500" y="15.300" text-anchor="middle" font-size="18" font-weight="700" fill="#7fa6cc" stroke="#27517c" stroke-width="1.300" style="font-family:'Liberation Sans',sans-serif">A</text><rect x="1.500" y="17.500" width="19.500" height="4.500" fill="#000"/></svg>
<svg style="left:1000.8px;top:113px" width="8" height="5" viewBox="0 0 8 5"><polygon points="0.3,0.3 7.3,0.3 3.8,4.2" fill="#000"/></svg>
<div style="left:0px;top:135px;width:1920px;height:1px;background:#a0a0a0"></div>
<div style="left:0px;top:136px;width:1920px;height:1px;background:#fcfcfc"></div>
<div style="left:0px;top:137px;width:1920px;height:41px;background:#f0f0f0"></div>
<div style="left:8px;top:143px;width:157px;height:28px;background:#fff;border:1px solid #ababab;box-sizing:border-box;box-shadow:inset 0 0 0 1px #f2f2f2"></div>
<div style="left:141px;top:145px;width:21px;height:24px;background:#e1e1e1;border:1px solid #adadad;box-sizing:border-box"></div>
<svg style="left:145.5px;top:153.0px" width="12" height="8" viewBox="0 0 12 8"><path d="M1.5 1.5l4.5 4.5 4.5-4.5" fill="none" stroke="#444" stroke-width="1.3"/></svg>
<span class="t" style="left:13.3px;top:157.58px;font-size:14.5px;letter-spacing:0.18px;margin-right:-0.18px;">A2</span>
<div style="left:279px;top:143px;width:1578px;height:27px;background:#fff;border:1px solid #e3e3e3;border-top:2px solid #696969;border-left:2px solid #696969;box-sizing:border-box"></div>
<span class="t" style="left:285.5px;top:157.58px;font-size:14.5px;letter-spacing:0.18px;margin-right:-0.18px;">Item Description</span>
<svg style="left:178px;top:145px" width="24" height="23" viewBox="0 0 24 23"><path d="M4.500 3.500l1 1.800 2 .3-1.500 1.400.4 2-1.900-1-1.800 1 .3-2-1.500-1.400 2-.3z" fill="#f5c43c"/><path d="M10.500 1.500l.6 1.200 1.300.2-1 .9.300 1.300-1.200-.6-1.200.6.300-1.300-1-.9 1.300-.2zM17.500 3.500l.5 1 1.100.2-.8.800.2 1.100-1-.5-1 .5.200-1.100-.8-.8 1.100-.2zM21 8.500l.4.800.9.100-.7.600.2.900-.8-.4-.8.400.2-.9-.7-.6.900-.1z" fill="#f1cd5f"/><path d="M2 20.500q3 .8 4-2.500l3-10q1-3 4-2.300" fill="none" stroke="#2a3138" stroke-width="1.900" stroke-linecap="round"/><path d="M5.500 11.500h6" stroke="#2a3138" stroke-width="1.500"/><path d="M12.500 13l6.500 7M19 13l-6.500 7" stroke="#2a3138" stroke-width="1.900"/></svg>
<svg style="left:211px;top:147px" width="20" height="20" viewBox="0 0 20 20"><path d="M2 2h15.500v4.500h-2.300l-1-1.500h-6.200l5 5-5 5.500h6.500l1-1.800h2.300v4.800h-16v-2.500l6-6-6-5.800z" fill="#56a7e8" stroke="#1d5f9f" stroke-width="1.300" stroke-linejoin="round"/></svg>
<svg style="left:245px;top:152px" width="16" height="10" viewBox="0 0 16 10"><path d="M1 2.800h13.500M1 7.200h13.500" stroke="#2f3a45" stroke-width="1.900"/></svg>
<div style="left:1861px;top:137px;width:1px;height:41px;background:#a5a5a5"></div>
<div style="left:1862px;top:137px;width:9px;height:866px;background:#f0f0f0"></div>
<div style="left:1870px;top:136px;width:1px;height:866px;background:#8f8f8f"></div>
<div style="left:1871px;top:136px;width:48px;height:866px;background:#efefef"></div>
<div style="left:1871px;top:136px;width:48px;height:1px;background:#a9a9a9"></div>
<div style="left:1918px;top:136px;width:1px;height:866px;background:#a9a9a9"></div>
<div style="left:1919px;top:136px;width:1px;height:866px;background:#f0f0f0"></div>
<div style="left:1868px;top:1001px;width:52px;height:1px;background:#b5b5b5"></div>
<div style="left:1881px;top:184px;width:29px;height:1px;background:#d5d5d5"></div>
<div style="left:1875px;top:189px;width:40px;height:40px;background:#f5f5f5;border:1px solid #b9b9b9;border-radius:4px;box-sizing:border-box"></div>
<svg style="left:1889px;top:154px" width="13" height="13" viewBox="0 0 13 13"><path d="M1 1.500h8M1 4h8M1 6.500h8" stroke="#3e3e3e" stroke-width="1.200"/><polygon points="5.500,8.800 11.500,8.800 8.500,12" fill="#2a2a2a"/></svg>
<svg style="left:1880px;top:192px" width="30" height="33" viewBox="0 0 30 33"><ellipse cx="15" cy="30" rx="10" ry="1.800" fill="#c6c6c6"/><polygon points="15,2 27,7.500 15,13 3,7.500" fill="#43b9f6"/><polygon points="21,4.750 27,7.500 21,10.250 15,7.500" fill="#a4ea4c"/><polygon points="3,7.500 15,13 15,27 3,21.500" fill="#1f95e0"/><polygon points="9,17.250 15,20 15,27 9,24.250" fill="#7ad02a"/><polygon points="15,13 27,7.500 27,21.500 15,27" fill="#86dc34"/><path d="M9 4.750l12 5.500M21 4.750l-12 5.500M3 14.500l12 5.500 12-5.500M9 10.250v14M21 10.250v14M15 13v14" fill="none" stroke="#e8fbff" stroke-width="1" opacity=".85"/><path d="M3 7.500l12 5.500 12-5.500" fill="none" stroke="#e8fbff" stroke-width="1" opacity=".9"/></svg>
<svg style="left:1879px;top:236px" width="33" height="34" viewBox="0 0 33 34"><ellipse cx="16" cy="31" rx="10" ry="1.800" fill="#cfcfcf"/><path d="M8 5.500q4-3.500 7 0l-1.500 3-5 1z" fill="#c86a14"/><path d="M12 8q8-2 11 6l-4 9-11 3z" fill="#15334f"/><path d="M11 10l-3 16 9-5z" fill="#2c7cd4"/><path d="M17 18q5-3 9 1-1 6-6 7-3-2-1-4z" fill="#78b83a"/><path d="M15 13q6-1 7 5-4-1-6 2z" fill="#2a5f9a"/><polygon points="20,3 21.500,6 24.500,6.300 22.300,8.500 23,11.500 20,10 17.300,11.500 18,8.500 15.800,6.300 18.800,6" fill="#c868d8" transform="scale(.75) translate(7,0)"/><polygon points="27,4 28.500,7 31.500,7.300 29.300,9.500 30,12.500 27,11 24.300,12.500 25,9.500 22.800,7.300 25.800,7" fill="#f5d048"/><polygon points="4,11 5.500,14 8.500,14.300 6.300,16.500 7,19.500 4,18 1.300,19.500 2,16.500 -.2,14.300 2.800,14" fill="#f070b0" transform="translate(1,0) scale(.85)"/><polygon points="29,14 30.200,16.400 32.800,16.700 30.900,18.500 31.400,21 29,19.800 26.700,21 27.200,18.500 25.300,16.700 27.900,16.400" fill="#e8506a"/></svg>
<svg style="left:1878px;top:280px" width="34" height="34" viewBox="0 0 34 34"><ellipse cx="17" cy="30.500" rx="11" ry="1.800" fill="#cfcfcf"/><g transform="rotate(-22 17 15)"><rect x="4" y="6" width="25" height="19" fill="#fbfcfd" stroke="#c0c6cc" stroke-width="1"/><rect x="6" y="8" width="21" height="14.500" fill="#8cc8f2"/><path d="M6 8h6l-6 4z" fill="#7ac043"/><path d="M6 22.500v-3q6-4 11-1t10-2v6z" fill="#5aa83a"/><path d="M12 19l4-5 4 5v3.500h-8z" fill="#3c78c8"/><path d="M19 21l6-2.500v3h-6z" fill="#a85a28"/></g></svg>
<svg style="left:1879px;top:323px" width="33" height="34" viewBox="0 0 33 34"><ellipse cx="16" cy="31.500" rx="10" ry="1.600" fill="#d2d2d2"/><circle cx="16" cy="16.500" r="12.300" fill="#fdfdfd" stroke="#f0a428" stroke-width="3.200"/><circle cx="16" cy="16.500" r="14" fill="none" stroke="#d4861a" stroke-width=".8"/><text x="16" y="10.500" text-anchor="middle" font-size="6.500" font-weight="700" fill="#444" style="font-family:'Liberation Sans',sans-serif">N</text><path d="M16 6.500v3M16 24v3M6 16.500h3M23 16.500h3" stroke="#b9c4d0" stroke-width=".9"/><path d="M22.500 9.500l-4.800 8.800-3.400-3.400z" fill="#e0354a"/><path d="M9.500 23.500l4.800-8.600 3.400 3.400z" fill="#3a7bd8"/><circle cx="16" cy="16.500" r="1.300" fill="#fff"/></svg>
<svg style="left:1879px;top:366px" width="33" height="36" viewBox="0 0 33 36"><ellipse cx="17" cy="33" rx="11" ry="1.600" fill="#c9c9c9"/><path d="M9.500 2.500h14l6 6v21.500h-20z" fill="#ddeefb" stroke="#2e97e0" stroke-width="1.500"/><path d="M23.500 2.500v6h6" fill="#f4faff" stroke="#2e97e0" stroke-width="1.200"/><path d="M2 26.500q4.500 1.500 6-3.500l3.500-12.500q1.200-4 5-3" fill="none" stroke="#2c4a72" stroke-width="2.300" stroke-linecap="round"/><path d="M7.500 15.500h7" stroke="#2c4a72" stroke-width="1.800"/><path d="M15.500 17.500l8.500 9M24 17.500l-8.500 9" stroke="#2c4a72" stroke-width="2.300"/></svg>
<svg style="left:1863px;top:545px" width="6" height="48" viewBox="0 0 6 48"><polygon points="1,1 4.5,4 1,7" fill="#666"/><polygon points="1,40 4.5,43 1,46" fill="#666"/><rect x="1.5" y="12" width="2" height="2" fill="#777"/><rect x="1.5" y="17" width="2" height="2" fill="#777"/><rect x="1.5" y="22" width="2" height="2" fill="#777"/><rect x="1.5" y="27" width="2" height="2" fill="#777"/><rect x="1.5" y="32" width="2" height="2" fill="#777"/></svg>
<div style="left:0px;top:178px;width:1840px;height:802px;background:#fff"></div>
<div style="left:361px;top:201px;width:1px;height:779px;background:#c6c6c6"></div>
<div style="left:455px;top:201px;width:1px;height:779px;background:#c6c6c6"></div>
<div style="left:547px;top:201px;width:1px;height:779px;background:#c6c6c6"></div>
<div style="left:603px;top:201px;width:1px;height:779px;background:#c6c6c6"></div>
<div style="left:704px;top:201px;width:1px;height:779px;background:#c6c6c6"></div>
<div style="left:828px;top:201px;width:1px;height:779px;background:#c6c6c6"></div>
<div style="left:927px;top:201px;width:1px;height:779px;background:#c6c6c6"></div>
<div style="left:1003px;top:201px;width:1px;height:779px;background:#c6c6c6"></div>
<div style="left:1108px;top:201px;width:1px;height:779px;background:#c6c6c6"></div>
<div style="left:1227px;top:201px;width:1px;height:779px;background:#c6c6c6"></div>
<div style="left:1303px;top:201px;width:1px;height:779px;background:#c6c6c6"></div>
<div style="left:1379px;top:201px;width:1px;height:779px;background:#c6c6c6"></div>
<div style="left:1455px;top:201px;width:1px;height:779px;background:#c6c6c6"></div>
<div style="left:1531px;top:201px;width:1px;height:779px;background:#c6c6c6"></div>
<div style="left:1608px;top:201px;width:1px;height:779px;background:#c6c6c6"></div>
<div style="left:1684px;top:201px;width:1px;height:779px;background:#c6c6c6"></div>
<div style="left:1760px;top:201px;width:1px;height:779px;background:#c6c6c6"></div>
<div style="left:1836px;top:201px;width:1px;height:779px;background:#c6c6c6"></div>
<div style="left:44px;top:278px;width:1796px;height:1px;background:#c6c6c6"></div>
<div style="left:44px;top:346px;width:1796px;height:1px;background:#c6c6c6"></div>
<div style="left:44px;top:402px;width:1796px;height:1px;background:#c6c6c6"></div>
<div style="left:44px;top:424px;width:1796px;height:1px;background:#c6c6c6"></div>
<div style="left:44px;top:447px;width:1796px;height:1px;background:#c6c6c6"></div>
<div style="left:44px;top:469px;width:1796px;height:1px;background:#c6c6c6"></div>
<div style="left:44px;top:492px;width:1796px;height:1px;background:#c6c6c6"></div>
<div style="left:44px;top:517px;width:1796px;height:1px;background:#c6c6c6"></div>
<div style="left:44px;top:542px;width:1796px;height:1px;background:#c6c6c6"></div>
<div style="left:44px;top:567px;width:1796px;height:1px;background:#c6c6c6"></div>
<div style="left:44px;top:592px;width:1796px;height:1px;background:#c6c6c6"></div>
<div style="left:44px;top:617px;width:1796px;height:1px;background:#c6c6c6"></div>
<div style="left:44px;top:642px;width:1796px;height:1px;background:#c6c6c6"></div>
<div style="left:44px;top:667px;width:1796px;height:1px;background:#c6c6c6"></div>
<div style="left:44px;top:692px;width:1796px;height:1px;background:#c6c6c6"></div>
<div style="left:44px;top:717px;width:1796px;height:1px;background:#c6c6c6"></div>
<div style="left:44px;top:742px;width:1796px;height:1px;background:#c6c6c6"></div>
<div style="left:44px;top:767px;width:1796px;height:1px;background:#c6c6c6"></div>
<div style="left:44px;top:792px;width:1796px;height:1px;background:#c6c6c6"></div>
<div style="left:44px;top:817px;width:1796px;height:1px;background:#c6c6c6"></div>
<div style="left:44px;top:839px;width:1796px;height:1px;background:#c6c6c6"></div>
<div style="left:44px;top:864px;width:1796px;height:1px;background:#c6c6c6"></div>
<div style="left:44px;top:887px;width:1796px;height:1px;background:#c6c6c6"></div>
<div style="left:44px;top:909px;width:1796px;height:1px;background:#c6c6c6"></div>
<div style="left:44px;top:932px;width:1796px;height:1px;background:#c6c6c6"></div>
<div style="left:44px;top:954px;width:1796px;height:1px;background:#c6c6c6"></div>
<div style="left:44px;top:977px;width:1796px;height:1px;background:#c6c6c6"></div>
<div style="left:1227px;top:201px;width:1px;height:779px;background:#a2a2a2"></div>
<div style="left:45px;top:202px;width:783px;height:76px;background:#fff"></div>
<div style="left:45px;top:279px;width:316px;height:123px;background:#fff"></div>
<div style="left:362px;top:279px;width:93px;height:123px;background:#fff"></div>
<div style="left:456px;top:279px;width:91px;height:123px;background:#fff"></div>
<div style="left:548px;top:279px;width:156px;height:67px;background:#fff"></div>
<div style="left:548px;top:347px;width:280px;height:55px;background:#fff"></div>
<div style="left:1004px;top:279px;width:104px;height:123px;background:#fff"></div>
<div style="left:1109px;top:279px;width:118px;height:123px;background:#fff"></div>
<div style="left:0px;top:177px;width:1840px;height:1px;background:#6f6f6f"></div>
<div style="left:2px;top:178px;width:1838px;height:23px;background:linear-gradient(#f9f9f9 0%,#f4f4f4 45%,#ebebeb 55%,#e9e9e9 100%)"></div>
<div style="left:2px;top:200px;width:1838px;height:1px;background:#7a7a7a"></div>
<div style="left:43px;top:178px;width:1px;height:23px;background:#8a8a8a"></div>
<div style="left:361px;top:178px;width:1px;height:23px;background:#8a8a8a"></div>
<div style="left:455px;top:178px;width:1px;height:23px;background:#8a8a8a"></div>
<div style="left:547px;top:178px;width:1px;height:23px;background:#8a8a8a"></div>
<div style="left:603px;top:178px;width:1px;height:23px;background:#8a8a8a"></div>
<div style="left:704px;top:178px;width:1px;height:23px;background:#8a8a8a"></div>
<div style="left:828px;top:178px;width:1px;height:23px;background:#8a8a8a"></div>
<div style="left:927px;top:178px;width:1px;height:23px;background:#8a8a8a"></div>
<div style="left:1003px;top:178px;width:1px;height:23px;background:#8a8a8a"></div>
<div style="left:1108px;top:178px;width:1px;height:23px;background:#8a8a8a"></div>
<div style="left:1227px;top:178px;width:1px;height:23px;background:#8a8a8a"></div>
<div style="left:1303px;top:178px;width:1px;height:23px;background:#8a8a8a"></div>
<div style="left:1379px;top:178px;width:1px;height:23px;background:#8a8a8a"></div>
<div style="left:1455px;top:178px;width:1px;height:23px;background:#8a8a8a"></div>
<div style="left:1531px;top:178px;width:1px;height:23px;background:#8a8a8a"></div>
<div style="left:1608px;top:178px;width:1px;height:23px;background:#8a8a8a"></div>
<div style="left:1684px;top:178px;width:1px;height:23px;background:#8a8a8a"></div>
<div style="left:1760px;top:178px;width:1px;height:23px;background:#8a8a8a"></div>
<div style="left:1836px;top:178px;width:1px;height:23px;background:#8a8a8a"></div>
<div style="left:44px;top:178px;width:317px;height:11px;background:#5ba7e3"></div>
<div style="left:44px;top:189px;width:317px;height:12px;background:#0078d7"></div>
<div style="left:44px;top:200px;width:317px;height:1px;background:#2f8fe0"></div>
<span class="t" style="left:203.0px;top:189.91px;font-size:14.7px;font-weight:700;color:#fff;transform:translateX(-50%) scaleX(0.9);">A</span>
<span class="t" style="left:408.5px;top:189.91px;font-size:14.7px;color:#111;transform:translateX(-50%) scaleX(0.9);">B</span>
<span class="t" style="left:501.5px;top:189.91px;font-size:14.7px;color:#111;transform:translateX(-50%) scaleX(0.9);">C</span>
<span class="t" style="left:575.5px;top:189.91px;font-size:14.7px;color:#111;transform:translateX(-50%) scaleX(0.9);">D</span>
<span class="t" style="left:654.0px;top:189.91px;font-size:14.7px;color:#111;transform:translateX(-50%) scaleX(0.9);">E</span>
<span class="t" style="left:766.5px;top:189.91px;font-size:14.7px;color:#111;transform:translateX(-50%) scaleX(0.9);">F</span>
<span class="t" style="left:878.0px;top:189.91px;font-size:14.7px;color:#111;transform:translateX(-50%) scaleX(0.9);">G</span>
<span class="t" style="left:965.5px;top:189.91px;font-size:14.7px;color:#111;transform:translateX(-50%) scaleX(0.9);">H</span>
<span class="t" style="left:1056.0px;top:189.91px;font-size:14.7px;color:#111;transform:translateX(-50%) scaleX(0.9);">I</span>
<span class="t" style="left:1168.0px;top:189.91px;font-size:14.7px;color:#111;transform:translateX(-50%) scaleX(0.9);">J</span>
<span class="t" style="left:1265.5px;top:189.91px;font-size:14.7px;color:#111;transform:translateX(-50%) scaleX(0.9);">K</span>
<span class="t" style="left:1341.5px;top:189.91px;font-size:14.7px;color:#111;transform:translateX(-50%) scaleX(0.9);">L</span>
<span class="t" style="left:1417.5px;top:189.91px;font-size:14.7px;color:#111;transform:translateX(-50%) scaleX(0.9);">M</span>
<span class="t" style="left:1493.5px;top:189.91px;font-size:14.7px;color:#111;transform:translateX(-50%) scaleX(0.9);">N</span>
<span class="t" style="left:1570.0px;top:189.91px;font-size:14.7px;color:#111;transform:translateX(-50%) scaleX(0.9);">O</span>
<span class="t" style="left:1646.5px;top:189.91px;font-size:14.7px;color:#111;transform:translateX(-50%) scaleX(0.9);">P</span>
<span class="t" style="left:1722.5px;top:189.91px;font-size:14.7px;color:#111;transform:translateX(-50%) scaleX(0.9);">Q</span>
<span class="t" style="left:1798.5px;top:189.91px;font-size:14.7px;color:#111;transform:translateX(-50%) scaleX(0.9);">R</span>
<div style="left:0px;top:178px;width:1px;height:802px;background:#f0f0f0"></div>
<div style="left:1px;top:178px;width:1px;height:822px;background:#7a7a7a"></div>
<div style="left:2px;top:201px;width:41px;height:777px;background:linear-gradient(90deg,#f7f7f7 0%,#f5f5f5 38%,#ececec 58%,#ebebeb 100%)"></div>
<div style="left:43px;top:178px;width:1px;height:802px;background:#7d7d7d"></div>
<div style="left:2px;top:278px;width:41px;height:1px;background:#8c8c8c"></div>
<div style="left:2px;top:346px;width:41px;height:1px;background:#8c8c8c"></div>
<div style="left:2px;top:402px;width:41px;height:1px;background:#8c8c8c"></div>
<div style="left:2px;top:424px;width:41px;height:1px;background:#8c8c8c"></div>
<div style="left:2px;top:447px;width:41px;height:1px;background:#8c8c8c"></div>
<div style="left:2px;top:469px;width:41px;height:1px;background:#8c8c8c"></div>
<div style="left:2px;top:492px;width:41px;height:1px;background:#8c8c8c"></div>
<div style="left:2px;top:517px;width:41px;height:1px;background:#8c8c8c"></div>
<div style="left:2px;top:542px;width:41px;height:1px;background:#8c8c8c"></div>
<div style="left:2px;top:567px;width:41px;height:1px;background:#8c8c8c"></div>
<div style="left:2px;top:592px;width:41px;height:1px;background:#8c8c8c"></div>
<div style="left:2px;top:617px;width:41px;height:1px;background:#8c8c8c"></div>
<div style="left:2px;top:642px;width:41px;height:1px;background:#8c8c8c"></div>
<div style="left:2px;top:667px;width:41px;height:1px;background:#8c8c8c"></div>
<div style="left:2px;top:692px;width:41px;height:1px;background:#8c8c8c"></div>
<div style="left:2px;top:717px;width:41px;height:1px;background:#8c8c8c"></div>
<div style="left:2px;top:742px;width:41px;height:1px;background:#8c8c8c"></div>
<div style="left:2px;top:767px;width:41px;height:1px;background:#8c8c8c"></div>
<div style="left:2px;top:792px;width:41px;height:1px;background:#8c8c8c"></div>
<div style="left:2px;top:817px;width:41px;height:1px;background:#8c8c8c"></div>
<div style="left:2px;top:839px;width:41px;height:1px;background:#8c8c8c"></div>
<div style="left:2px;top:864px;width:41px;height:1px;background:#8c8c8c"></div>
<div style="left:2px;top:887px;width:41px;height:1px;background:#8c8c8c"></div>
<div style="left:2px;top:909px;width:41px;height:1px;background:#8c8c8c"></div>
<div style="left:2px;top:932px;width:41px;height:1px;background:#8c8c8c"></div>
<div style="left:2px;top:954px;width:41px;height:1px;background:#8c8c8c"></div>
<div style="left:2px;top:977px;width:41px;height:1px;background:#8c8c8c"></div>
<div style="left:2px;top:279px;width:20px;height:67px;background:#5ba7e3"></div>
<div style="left:22px;top:279px;width:21px;height:67px;background:#0078d7"></div>
<span class="t" style="left:22.3px;top:240.01px;font-size:14.7px;color:#111;transform:translateX(-50%) scaleX(0.9);">1</span>
<span class="t" style="left:22.3px;top:312.51px;font-size:14.7px;font-weight:700;color:#fff;transform:translateX(-50%) scaleX(0.9);">2</span>
<span class="t" style="left:22.3px;top:374.51px;font-size:14.7px;color:#111;transform:translateX(-50%) scaleX(0.9);">3</span>
<span class="t" style="left:22.3px;top:413.51px;font-size:14.7px;color:#111;transform:translateX(-50%) scaleX(0.9);">4</span>
<span class="t" style="left:22.3px;top:436.01px;font-size:14.7px;color:#111;transform:translateX(-50%) scaleX(0.9);">5</span>
<span class="t" style="left:22.3px;top:458.51px;font-size:14.7px;color:#111;transform:translateX(-50%) scaleX(0.9);">6</span>
<span class="t" style="left:22.3px;top:481.01px;font-size:14.7px;color:#111;transform:translateX(-50%) scaleX(0.9);">7</span>
<span class="t" style="left:22.3px;top:505.01px;font-size:14.7px;color:#111;transform:translateX(-50%) scaleX(0.9);">8</span>
<span class="t" style="left:22.3px;top:530.01px;font-size:14.7px;color:#111;transform:translateX(-50%) scaleX(0.9);">9</span>
<span class="t" style="left:22.3px;top:555.01px;font-size:14.7px;color:#111;transform:translateX(-50%) scaleX(0.9);">10</span>
<span class="t" style="left:22.3px;top:580.01px;font-size:14.7px;color:#111;transform:translateX(-50%) scaleX(0.9);">11</span>
<span class="t" style="left:22.3px;top:605.01px;font-size:14.7px;color:#111;transform:translateX(-50%) scaleX(0.9);">12</span>
<span class="t" style="left:22.3px;top:630.01px;font-size:14.7px;color:#111;transform:translateX(-50%) scaleX(0.9);">13</span>
<span class="t" style="left:22.3px;top:655.01px;font-size:14.7px;color:#111;transform:translateX(-50%) scaleX(0.9);">14</span>
<span class="t" style="left:22.3px;top:680.01px;font-size:14.7px;color:#111;transform:translateX(-50%) scaleX(0.9);">15</span>
<span class="t" style="left:22.3px;top:705.01px;font-size:14.7px;color:#111;transform:translateX(-50%) scaleX(0.9);">16</span>
<span class="t" style="left:22.3px;top:730.01px;font-size:14.7px;color:#111;transform:translateX(-50%) scaleX(0.9);">17</span>
<span class="t" style="left:22.3px;top:755.01px;font-size:14.7px;color:#111;transform:translateX(-50%) scaleX(0.9);">18</span>
<span class="t" style="left:22.3px;top:780.01px;font-size:14.7px;color:#111;transform:translateX(-50%) scaleX(0.9);">19</span>
<span class="t" style="left:22.3px;top:805.01px;font-size:14.7px;color:#111;transform:translateX(-50%) scaleX(0.9);">20</span>
<span class="t" style="left:22.3px;top:828.51px;font-size:14.7px;color:#111;transform:translateX(-50%) scaleX(0.9);">21</span>
<span class="t" style="left:22.3px;top:852.01px;font-size:14.7px;color:#111;transform:translateX(-50%) scaleX(0.9);">22</span>
<span class="t" style="left:22.3px;top:876.01px;font-size:14.7px;color:#111;transform:translateX(-50%) scaleX(0.9);">23</span>
<span class="t" style="left:22.3px;top:898.51px;font-size:14.7px;color:#111;transform:translateX(-50%) scaleX(0.9);">24</span>
<span class="t" style="left:22.3px;top:921.01px;font-size:14.7px;color:#111;transform:translateX(-50%) scaleX(0.9);">25</span>
<span class="t" style="left:22.3px;top:943.51px;font-size:14.7px;color:#111;transform:translateX(-50%) scaleX(0.9);">26</span>
<span class="t" style="left:22.3px;top:966.01px;font-size:14.7px;color:#111;transform:translateX(-50%) scaleX(0.9);">27</span>
<div style="left:361px;top:278px;width:1px;height:700px;background:#000"></div>
<div style="left:455px;top:278px;width:1px;height:700px;background:#000"></div>
<div style="left:547px;top:278px;width:1px;height:700px;background:#000"></div>
<div style="left:828px;top:278px;width:1px;height:700px;background:#000"></div>
<div style="left:927px;top:278px;width:1px;height:700px;background:#000"></div>
<div style="left:603px;top:402px;width:1px;height:576px;background:#000"></div>
<div style="left:704px;top:402px;width:1px;height:576px;background:#000"></div>
<div style="left:704px;top:278px;width:1px;height:69px;background:#000"></div>
<div style="left:828px;top:201px;width:1px;height:78px;background:#000"></div>
<div style="left:44px;top:278px;width:884px;height:1px;background:#000"></div>
<div style="left:547px;top:346px;width:381px;height:1px;background:#000"></div>
<div style="left:44px;top:402px;width:884px;height:1px;background:#000"></div>
<div style="left:44px;top:424px;width:884px;height:1px;background:#000"></div>
<div style="left:44px;top:447px;width:884px;height:1px;background:#000"></div>
<div style="left:44px;top:469px;width:884px;height:1px;background:#000"></div>
<div style="left:44px;top:492px;width:884px;height:1px;background:#000"></div>
<div style="left:44px;top:517px;width:884px;height:1px;background:#000"></div>
<div style="left:44px;top:542px;width:884px;height:1px;background:#000"></div>
<div style="left:44px;top:567px;width:884px;height:1px;background:#000"></div>
<div style="left:44px;top:592px;width:884px;height:1px;background:#000"></div>
<div style="left:44px;top:617px;width:884px;height:1px;background:#000"></div>
<div style="left:44px;top:642px;width:884px;height:1px;background:#000"></div>
<div style="left:44px;top:667px;width:884px;height:1px;background:#000"></div>
<div style="left:44px;top:692px;width:884px;height:1px;background:#000"></div>
<div style="left:44px;top:717px;width:884px;height:1px;background:#000"></div>
<div style="left:44px;top:742px;width:884px;height:1px;background:#000"></div>
<div style="left:44px;top:767px;width:884px;height:1px;background:#000"></div>
<div style="left:44px;top:792px;width:884px;height:1px;background:#000"></div>
<div style="left:44px;top:817px;width:884px;height:1px;background:#000"></div>
<div style="left:44px;top:839px;width:884px;height:1px;background:#000"></div>
<div style="left:44px;top:864px;width:884px;height:1px;background:#000"></div>
<div style="left:44px;top:887px;width:884px;height:1px;background:#000"></div>
<div style="left:44px;top:909px;width:884px;height:1px;background:#000"></div>
<div style="left:44px;top:932px;width:884px;height:1px;background:#000"></div>
<div style="left:44px;top:954px;width:884px;height:1px;background:#000"></div>
<div style="left:44px;top:977px;width:884px;height:1px;background:#000"></div>
<div style="left:1003px;top:278px;width:1px;height:192px;background:#000"></div>
<div style="left:1108px;top:278px;width:1px;height:192px;background:#000"></div>
<div style="left:1227px;top:278px;width:1px;height:192px;background:#000"></div>
<div style="left:1003px;top:278px;width:225px;height:1px;background:#000"></div>
<div style="left:927px;top:402px;width:301px;height:1px;background:#000"></div>
<div style="left:927px;top:424px;width:301px;height:1px;background:#000"></div>
<div style="left:927px;top:447px;width:301px;height:1px;background:#000"></div>
<div style="left:927px;top:469px;width:301px;height:1px;background:#000"></div>
<div style="left:43px;top:277px;width:320px;height:3px;background:#000"></div>
<div style="left:43px;top:400px;width:320px;height:3px;background:#000"></div>
<div style="left:43px;top:277px;width:2px;height:126px;background:#000"></div>
<div style="left:359px;top:277px;width:3px;height:126px;background:#000"></div>
<div style="left:359px;top:400px;width:6px;height:5px;background:#000"></div>
<span class="t" style="left:45.1px;top:413.03px;font-size:15.5px;letter-spacing:0.595px;margin-right:-0.595px;">Bond Paper (Size: A4) (5 reams per box)</span>
<span class="t" style="left:407.7px;top:413.03px;font-size:15.5px;letter-spacing:-0.4px;margin-right:0.4px;transform:translateX(-50%);">BOX</span>
<span class="t" style="left:501.5px;top:413.03px;font-size:15.5px;transform:translateX(-50%);">6</span>
<span class="t" style="left:575.5px;top:413.03px;font-size:15.5px;letter-spacing:0.35px;margin-right:-0.35px;transform:translateX(-50%);">Php</span>
<span class="t" style="right:1221.4px;top:413.03px;font-size:15.5px;letter-spacing:0.22px;margin-right:-0.22px;">1,110.00</span>
<span class="t" style="right:1097.4px;top:413.03px;font-size:15.5px;letter-spacing:0.22px;margin-right:-0.22px;">6,660.00</span>
<span class="t" style="right:998.4px;top:413.03px;font-size:15.5px;letter-spacing:0.22px;margin-right:-0.22px;">111.00</span>
<span class="t" style="left:45.1px;top:436.03px;font-size:15.5px;letter-spacing:0.342px;margin-right:-0.342px;">Toners (HP79A, 44A, Samsung 101S)</span>
<span class="t" style="left:407.7px;top:436.03px;font-size:15.5px;letter-spacing:0.2px;margin-right:-0.2px;transform:translateX(-50%);">PC</span>
<span class="t" style="left:501.5px;top:436.03px;font-size:15.5px;transform:translateX(-50%);">5</span>
<span class="t" style="left:575.5px;top:436.03px;font-size:15.5px;letter-spacing:0.35px;margin-right:-0.35px;transform:translateX(-50%);">Php</span>
<span class="t" style="right:1221.4px;top:436.03px;font-size:15.5px;letter-spacing:0.22px;margin-right:-0.22px;">3,432.00</span>
<span class="t" style="right:1097.4px;top:436.03px;font-size:15.5px;letter-spacing:0.22px;margin-right:-0.22px;">17,160.00</span>
<span class="t" style="right:998.4px;top:436.03px;font-size:15.5px;letter-spacing:0.22px;margin-right:-0.22px;">286.00</span>
<span class="t" style="left:45.1px;top:458.03px;font-size:15.5px;letter-spacing:0.704px;margin-right:-0.704px;">Stamp pad</span>
<span class="t" style="left:407.7px;top:458.03px;font-size:15.5px;letter-spacing:0.2px;margin-right:-0.2px;transform:translateX(-50%);">PC</span>
<span class="t" style="left:501.5px;top:458.03px;font-size:15.5px;transform:translateX(-50%);">4</span>
<span class="t" style="left:575.5px;top:458.03px;font-size:15.5px;letter-spacing:0.35px;margin-right:-0.35px;transform:translateX(-50%);">Php</span>
<span class="t" style="right:1221.4px;top:458.03px;font-size:15.5px;letter-spacing:0.22px;margin-right:-0.22px;">150.00</span>
<span class="t" style="right:1097.4px;top:458.03px;font-size:15.5px;letter-spacing:0.22px;margin-right:-0.22px;">600.00</span>
<span class="t" style="right:998.4px;top:458.03px;font-size:15.5px;letter-spacing:0.22px;margin-right:-0.22px;">10.00</span>
<span class="t" style="left:45.1px;top:481.03px;font-size:15.5px;letter-spacing:0.673px;margin-right:-0.673px;">Black Ballpen</span>
<span class="t" style="left:407.7px;top:481.03px;font-size:15.5px;letter-spacing:-0.4px;margin-right:0.4px;transform:translateX(-50%);">BOX</span>
<span class="t" style="left:501.5px;top:481.03px;font-size:15.5px;transform:translateX(-50%);">50</span>
<span class="t" style="left:575.5px;top:481.03px;font-size:15.5px;letter-spacing:0.35px;margin-right:-0.35px;transform:translateX(-50%);">Php</span>
<span class="t" style="right:1221.4px;top:481.03px;font-size:15.5px;letter-spacing:0.22px;margin-right:-0.22px;">15.00</span>
<span class="t" style="right:1097.4px;top:481.03px;font-size:15.5px;letter-spacing:0.22px;margin-right:-0.22px;">750.00</span>
<span class="t" style="right:998.4px;top:481.03px;font-size:15.5px;letter-spacing:0.22px;margin-right:-0.22px;">12.50</span>
<span class="t" style="left:56.3px;top:505.88px;font-size:16.5px;letter-spacing:0.687px;margin-right:-0.687px;">Sign pen 0.7mm (black, blue, red)</span>
<span class="t" style="left:407.7px;top:506.03px;font-size:15.5px;letter-spacing:-0.4px;margin-right:0.4px;transform:translateX(-50%);">BOX</span>
<span class="t" style="left:501.5px;top:506.03px;font-size:15.5px;transform:translateX(-50%);">2</span>
<span class="t" style="left:575.5px;top:506.03px;font-size:15.5px;letter-spacing:0.35px;margin-right:-0.35px;transform:translateX(-50%);">Php</span>
<span class="t" style="right:1221.4px;top:506.03px;font-size:15.5px;letter-spacing:0.22px;margin-right:-0.22px;">1,350.00</span>
<span class="t" style="right:1097.4px;top:506.03px;font-size:15.5px;letter-spacing:0.22px;margin-right:-0.22px;">2,700.00</span>
<span class="t" style="right:998.4px;top:506.03px;font-size:15.5px;letter-spacing:0.22px;margin-right:-0.22px;">45.00</span>
<span class="t" style="left:56.3px;top:530.88px;font-size:16.5px;letter-spacing:0.865px;margin-right:-0.865px;">Pritt pocket pen correction fluid</span>
<span class="t" style="left:407.7px;top:531.03px;font-size:15.5px;letter-spacing:0.2px;margin-right:-0.2px;transform:translateX(-50%);">PC</span>
<span class="t" style="left:501.5px;top:531.03px;font-size:15.5px;transform:translateX(-50%);">6</span>
<span class="t" style="left:575.5px;top:531.03px;font-size:15.5px;letter-spacing:0.35px;margin-right:-0.35px;transform:translateX(-50%);">Php</span>
<span class="t" style="right:1221.4px;top:531.03px;font-size:15.5px;letter-spacing:0.22px;margin-right:-0.22px;">126.00</span>
<span class="t" style="right:1097.4px;top:531.03px;font-size:15.5px;letter-spacing:0.22px;margin-right:-0.22px;">756.00</span>
<span class="t" style="right:998.4px;top:531.03px;font-size:15.5px;letter-spacing:0.22px;margin-right:-0.22px;">12.60</span>
<span class="t" style="left:56.3px;top:555.88px;font-size:16.5px;letter-spacing:0.871px;margin-right:-0.871px;">Correction tape</span>
<span class="t" style="left:407.7px;top:556.03px;font-size:15.5px;letter-spacing:0.2px;margin-right:-0.2px;transform:translateX(-50%);">PC</span>
<span class="t" style="left:501.5px;top:556.03px;font-size:15.5px;transform:translateX(-50%);">6</span>
<span class="t" style="left:575.5px;top:556.03px;font-size:15.5px;letter-spacing:0.35px;margin-right:-0.35px;transform:translateX(-50%);">Php</span>
<span class="t" style="right:1221.4px;top:556.03px;font-size:15.5px;letter-spacing:0.22px;margin-right:-0.22px;">123.00</span>
<span class="t" style="right:1097.4px;top:556.03px;font-size:15.5px;letter-spacing:0.22px;margin-right:-0.22px;">738.00</span>
<span class="t" style="right:998.4px;top:556.03px;font-size:15.5px;letter-spacing:0.22px;margin-right:-0.22px;">12.30</span>
<span class="t" style="left:56.3px;top:580.88px;font-size:16.5px;letter-spacing:0.693px;margin-right:-0.693px;">Paper clips (big)</span>
<span class="t" style="left:407.7px;top:581.03px;font-size:15.5px;letter-spacing:0.2px;margin-right:-0.2px;transform:translateX(-50%);">box</span>
<span class="t" style="left:501.5px;top:581.03px;font-size:15.5px;transform:translateX(-50%);">2</span>
<span class="t" style="left:575.5px;top:581.03px;font-size:15.5px;letter-spacing:0.35px;margin-right:-0.35px;transform:translateX(-50%);">Php</span>
<span class="t" style="right:1221.4px;top:581.03px;font-size:15.5px;letter-spacing:0.22px;margin-right:-0.22px;">64.20</span>
<span class="t" style="right:1097.4px;top:581.03px;font-size:15.5px;letter-spacing:0.22px;margin-right:-0.22px;">128.40</span>
<span class="t" style="right:998.4px;top:581.03px;font-size:15.5px;letter-spacing:0.22px;margin-right:-0.22px;">2.14</span>
<span class="t" style="left:56.3px;top:605.88px;font-size:16.5px;letter-spacing:0.755px;margin-right:-0.755px;">Paper clips (small)</span>
<span class="t" style="left:407.7px;top:606.03px;font-size:15.5px;letter-spacing:0.2px;margin-right:-0.2px;transform:translateX(-50%);">box</span>
<span class="t" style="left:501.5px;top:606.03px;font-size:15.5px;transform:translateX(-50%);">3</span>
<span class="t" style="left:575.5px;top:606.03px;font-size:15.5px;letter-spacing:0.35px;margin-right:-0.35px;transform:translateX(-50%);">Php</span>
<span class="t" style="right:1221.4px;top:606.03px;font-size:15.5px;letter-spacing:0.22px;margin-right:-0.22px;">30.00</span>
<span class="t" style="right:1097.4px;top:606.03px;font-size:15.5px;letter-spacing:0.22px;margin-right:-0.22px;">90.00</span>
<span class="t" style="right:998.4px;top:606.03px;font-size:15.5px;letter-spacing:0.22px;margin-right:-0.22px;">1.50</span>
<span class="t" style="left:56.3px;top:630.88px;font-size:16.5px;letter-spacing:0.79px;margin-right:-0.79px;">Staples No. 26/6 mm</span>
<span class="t" style="left:407.7px;top:631.03px;font-size:15.5px;letter-spacing:-0.4px;margin-right:0.4px;transform:translateX(-50%);">BOX</span>
<span class="t" style="left:501.5px;top:631.03px;font-size:15.5px;transform:translateX(-50%);">1</span>
<span class="t" style="left:575.5px;top:631.03px;font-size:15.5px;letter-spacing:0.35px;margin-right:-0.35px;transform:translateX(-50%);">Php</span>
<span class="t" style="right:1221.4px;top:631.03px;font-size:15.5px;letter-spacing:0.22px;margin-right:-0.22px;">300.00</span>
<span class="t" style="right:1097.4px;top:631.03px;font-size:15.5px;letter-spacing:0.22px;margin-right:-0.22px;">300.00</span>
<span class="t" style="right:998.4px;top:631.03px;font-size:15.5px;letter-spacing:0.22px;margin-right:-0.22px;">5.00</span>
<span class="t" style="left:56.3px;top:655.88px;font-size:16.5px;letter-spacing:0.504px;margin-right:-0.504px;">Staples No. P-10</span>
<span class="t" style="left:407.7px;top:656.03px;font-size:15.5px;letter-spacing:-0.4px;margin-right:0.4px;transform:translateX(-50%);">BOX</span>
<span class="t" style="left:501.5px;top:656.03px;font-size:15.5px;transform:translateX(-50%);">1</span>
<span class="t" style="left:575.5px;top:656.03px;font-size:15.5px;letter-spacing:0.35px;margin-right:-0.35px;transform:translateX(-50%);">Php</span>
<span class="t" style="right:1221.4px;top:656.03px;font-size:15.5px;letter-spacing:0.22px;margin-right:-0.22px;">588.00</span>
<span class="t" style="right:1097.4px;top:656.03px;font-size:15.5px;letter-spacing:0.22px;margin-right:-0.22px;">588.00</span>
<span class="t" style="right:998.4px;top:656.03px;font-size:15.5px;letter-spacing:0.22px;margin-right:-0.22px;">9.80</span>
<span class="t" style="left:56.3px;top:680.88px;font-size:16.5px;letter-spacing:0.85px;margin-right:-0.85px;">Stabilo highlighter pen</span>
<span class="t" style="left:407.7px;top:681.03px;font-size:15.5px;letter-spacing:0.2px;margin-right:-0.2px;transform:translateX(-50%);">PC</span>
<span class="t" style="left:501.5px;top:681.03px;font-size:15.5px;transform:translateX(-50%);">5</span>
<span class="t" style="left:575.5px;top:681.03px;font-size:15.5px;letter-spacing:0.35px;margin-right:-0.35px;transform:translateX(-50%);">Php</span>
<span class="t" style="right:1221.4px;top:681.03px;font-size:15.5px;letter-spacing:0.22px;margin-right:-0.22px;">42.00</span>
<span class="t" style="right:1097.4px;top:681.03px;font-size:15.5px;letter-spacing:0.22px;margin-right:-0.22px;">210.00</span>
<span class="t" style="right:998.4px;top:681.03px;font-size:15.5px;letter-spacing:0.22px;margin-right:-0.22px;">3.50</span>
<span class="t" style="left:56.3px;top:705.88px;font-size:16.5px;letter-spacing:0.689px;margin-right:-0.689px;">Paste (Coprex Coll 35 gm) glue stick</span>
<span class="t" style="left:407.7px;top:706.03px;font-size:15.5px;letter-spacing:0.2px;margin-right:-0.2px;transform:translateX(-50%);">PC</span>
<span class="t" style="left:501.5px;top:706.03px;font-size:15.5px;transform:translateX(-50%);">5</span>
<span class="t" style="left:575.5px;top:706.03px;font-size:15.5px;letter-spacing:0.35px;margin-right:-0.35px;transform:translateX(-50%);">Php</span>
<span class="t" style="right:1221.4px;top:706.03px;font-size:15.5px;letter-spacing:0.22px;margin-right:-0.22px;">108.00</span>
<span class="t" style="right:1097.4px;top:706.03px;font-size:15.5px;letter-spacing:0.22px;margin-right:-0.22px;">540.00</span>
<span class="t" style="right:998.4px;top:706.03px;font-size:15.5px;letter-spacing:0.22px;margin-right:-0.22px;">9.00</span>
<span class="t" style="left:56.3px;top:730.88px;font-size:16.5px;letter-spacing:0.692px;margin-right:-0.692px;">Scotch tape (big)</span>
<span class="t" style="left:407.7px;top:731.03px;font-size:15.5px;letter-spacing:0.2px;margin-right:-0.2px;transform:translateX(-50%);">PC</span>
<span class="t" style="left:501.5px;top:731.03px;font-size:15.5px;transform:translateX(-50%);">4</span>
<span class="t" style="left:575.5px;top:731.03px;font-size:15.5px;letter-spacing:0.35px;margin-right:-0.35px;transform:translateX(-50%);">Php</span>
<span class="t" style="right:1221.4px;top:731.03px;font-size:15.5px;letter-spacing:0.22px;margin-right:-0.22px;">93.00</span>
<span class="t" style="right:1097.4px;top:731.03px;font-size:15.5px;letter-spacing:0.22px;margin-right:-0.22px;">372.00</span>
<span class="t" style="right:998.4px;top:731.03px;font-size:15.5px;letter-spacing:0.22px;margin-right:-0.22px;">6.20</span>
<span class="t" style="left:56.3px;top:755.88px;font-size:16.5px;letter-spacing:0.738px;margin-right:-0.738px;">Scotch tape (small)</span>
<span class="t" style="left:407.7px;top:756.03px;font-size:15.5px;letter-spacing:0.2px;margin-right:-0.2px;transform:translateX(-50%);">PC</span>
<span class="t" style="left:501.5px;top:756.03px;font-size:15.5px;transform:translateX(-50%);">8</span>
<span class="t" style="left:575.5px;top:756.03px;font-size:15.5px;letter-spacing:0.35px;margin-right:-0.35px;transform:translateX(-50%);">Php</span>
<span class="t" style="right:1221.4px;top:756.03px;font-size:15.5px;letter-spacing:0.22px;margin-right:-0.22px;">66.00</span>
<span class="t" style="right:1097.4px;top:756.03px;font-size:15.5px;letter-spacing:0.22px;margin-right:-0.22px;">528.00</span>
<span class="t" style="right:998.4px;top:756.03px;font-size:15.5px;letter-spacing:0.22px;margin-right:-0.22px;">8.80</span>
<span class="t" style="left:56.3px;top:780.88px;font-size:16.5px;letter-spacing:0.874px;margin-right:-0.874px;">masking tape (big)</span>
<span class="t" style="left:407.7px;top:781.03px;font-size:15.5px;letter-spacing:0.2px;margin-right:-0.2px;transform:translateX(-50%);">PC</span>
<span class="t" style="left:501.5px;top:781.03px;font-size:15.5px;transform:translateX(-50%);">3</span>
<span class="t" style="left:575.5px;top:781.03px;font-size:15.5px;letter-spacing:0.35px;margin-right:-0.35px;transform:translateX(-50%);">Php</span>
<span class="t" style="right:1221.4px;top:781.03px;font-size:15.5px;letter-spacing:0.22px;margin-right:-0.22px;">198.00</span>
<span class="t" style="right:1097.4px;top:781.03px;font-size:15.5px;letter-spacing:0.22px;margin-right:-0.22px;">594.00</span>
<span class="t" style="right:998.4px;top:781.03px;font-size:15.5px;letter-spacing:0.22px;margin-right:-0.22px;">9.90</span>
<span class="t" style="left:56.3px;top:805.88px;font-size:16.5px;letter-spacing:0.868px;margin-right:-0.868px;">packaging tape (big)</span>
<span class="t" style="left:407.7px;top:806.03px;font-size:15.5px;letter-spacing:0.2px;margin-right:-0.2px;transform:translateX(-50%);">PC</span>
<span class="t" style="left:501.5px;top:806.03px;font-size:15.5px;transform:translateX(-50%);">6</span>
<span class="t" style="left:575.5px;top:806.03px;font-size:15.5px;letter-spacing:0.35px;margin-right:-0.35px;transform:translateX(-50%);">Php</span>
<span class="t" style="right:1221.4px;top:806.03px;font-size:15.5px;letter-spacing:0.22px;margin-right:-0.22px;">93.00</span>
<span class="t" style="right:1097.4px;top:806.03px;font-size:15.5px;letter-spacing:0.22px;margin-right:-0.22px;">558.00</span>
<span class="t" style="right:998.4px;top:806.03px;font-size:15.5px;letter-spacing:0.22px;margin-right:-0.22px;">9.30</span>
<span class="t" style="left:45.1px;top:828.03px;font-size:15.5px;letter-spacing:0.902px;margin-right:-0.902px;">Stamp pad ink (blue, red, violet)</span>
<span class="t" style="left:407.7px;top:828.03px;font-size:15.5px;letter-spacing:0.2px;margin-right:-0.2px;transform:translateX(-50%);">PC</span>
<span class="t" style="left:501.5px;top:828.03px;font-size:15.5px;transform:translateX(-50%);">3</span>
<span class="t" style="left:575.5px;top:828.03px;font-size:15.5px;letter-spacing:0.35px;margin-right:-0.35px;transform:translateX(-50%);">Php</span>
<span class="t" style="right:1221.4px;top:828.03px;font-size:15.5px;letter-spacing:0.22px;margin-right:-0.22px;">258.00</span>
<span class="t" style="right:1097.4px;top:828.03px;font-size:15.5px;letter-spacing:0.22px;margin-right:-0.22px;">774.00</span>
<span class="t" style="right:998.4px;top:828.03px;font-size:15.5px;letter-spacing:0.22px;margin-right:-0.22px;">12.90</span>
<span class="t" style="left:56.3px;top:852.88px;font-size:16.5px;letter-spacing:0.688px;margin-right:-0.688px;">Rubber band</span>
<span class="t" style="left:407.7px;top:853.03px;font-size:15.5px;letter-spacing:0.2px;margin-right:-0.2px;transform:translateX(-50%);">box</span>
<span class="t" style="left:501.5px;top:853.03px;font-size:15.5px;transform:translateX(-50%);">1</span>
<span class="t" style="left:575.5px;top:853.03px;font-size:15.5px;letter-spacing:0.35px;margin-right:-0.35px;transform:translateX(-50%);">Php</span>
<span class="t" style="right:1221.4px;top:853.03px;font-size:15.5px;letter-spacing:0.22px;margin-right:-0.22px;">147.00</span>
<span class="t" style="right:1097.4px;top:853.03px;font-size:15.5px;letter-spacing:0.22px;margin-right:-0.22px;">147.00</span>
<span class="t" style="right:998.4px;top:853.03px;font-size:15.5px;letter-spacing:0.22px;margin-right:-0.22px;">2.45</span>
<span class="t" style="left:45.1px;top:876.03px;font-size:15.5px;letter-spacing:0.794px;margin-right:-0.794px;">Binder clips (32mm, 41mm, 51mm)</span>
<span class="t" style="left:407.7px;top:876.03px;font-size:15.5px;letter-spacing:-0.4px;margin-right:0.4px;transform:translateX(-50%);">BOX</span>
<span class="t" style="left:501.5px;top:876.03px;font-size:15.5px;transform:translateX(-50%);">3</span>
<span class="t" style="left:575.5px;top:876.03px;font-size:15.5px;letter-spacing:0.35px;margin-right:-0.35px;transform:translateX(-50%);">Php</span>
<span class="t" style="right:1221.4px;top:876.03px;font-size:15.5px;letter-spacing:0.22px;margin-right:-0.22px;">100.00</span>
<span class="t" style="right:1097.4px;top:876.03px;font-size:15.5px;letter-spacing:0.22px;margin-right:-0.22px;">300.00</span>
<span class="t" style="right:998.4px;top:876.03px;font-size:15.5px;letter-spacing:0.22px;margin-right:-0.22px;">5.00</span>
<span class="t" style="left:45.1px;top:898.03px;font-size:15.5px;letter-spacing:1.087px;margin-right:-1.087px;">Staple wire remover</span>
<span class="t" style="left:407.7px;top:898.03px;font-size:15.5px;letter-spacing:0.2px;margin-right:-0.2px;transform:translateX(-50%);">PC</span>
<span class="t" style="left:501.5px;top:898.03px;font-size:15.5px;transform:translateX(-50%);">3</span>
<span class="t" style="left:575.5px;top:898.03px;font-size:15.5px;letter-spacing:0.35px;margin-right:-0.35px;transform:translateX(-50%);">Php</span>
<span class="t" style="right:1221.4px;top:898.03px;font-size:15.5px;letter-spacing:0.22px;margin-right:-0.22px;">120.00</span>
<span class="t" style="right:1097.4px;top:898.03px;font-size:15.5px;letter-spacing:0.22px;margin-right:-0.22px;">360.00</span>
<span class="t" style="right:998.4px;top:898.03px;font-size:15.5px;letter-spacing:0.22px;margin-right:-0.22px;">6.00</span>
<span class="t" style="left:45.1px;top:921.03px;font-size:15.5px;letter-spacing:0.996px;margin-right:-0.996px;">Stapler</span>
<span class="t" style="left:407.7px;top:921.03px;font-size:15.5px;letter-spacing:0.2px;margin-right:-0.2px;transform:translateX(-50%);">PC</span>
<span class="t" style="left:501.5px;top:921.03px;font-size:15.5px;transform:translateX(-50%);">2</span>
<span class="t" style="left:575.5px;top:921.03px;font-size:15.5px;letter-spacing:0.35px;margin-right:-0.35px;transform:translateX(-50%);">Php</span>
<span class="t" style="right:1221.4px;top:921.03px;font-size:15.5px;letter-spacing:0.22px;margin-right:-0.22px;">300.00</span>
<span class="t" style="right:1097.4px;top:921.03px;font-size:15.5px;letter-spacing:0.22px;margin-right:-0.22px;">600.00</span>
<span class="t" style="right:998.4px;top:921.03px;font-size:15.5px;letter-spacing:0.22px;margin-right:-0.22px;">10.00</span>
<span class="t" style="right:817.4000000000001px;top:413.03px;font-size:15.5px;letter-spacing:0.22px;margin-right:-0.22px;">6,516.00</span>
<span class="t" style="right:698.4000000000001px;top:413.03px;font-size:15.5px;letter-spacing:0.22px;margin-right:-0.22px;">6,711.48</span>
<span class="t" style="left:1228.6999999999998px;top:413.03px;font-size:15.5px;letter-spacing:0.934px;margin-right:-0.934px;">plus 3% inflation rate</span>
<span class="t" style="right:817.4000000000001px;top:436.03px;font-size:15.5px;letter-spacing:0.22px;margin-right:-0.22px;">17,095.00</span>
<span class="t" style="right:698.4000000000001px;top:436.03px;font-size:15.5px;letter-spacing:0.22px;margin-right:-0.22px;">17,607.85</span>
<span class="t" style="left:1228.6999999999998px;top:436.03px;font-size:15.5px;letter-spacing:0.934px;margin-right:-0.934px;">plus 3% inflation rate</span>
<span class="t" style="right:817.4000000000001px;top:458.03px;font-size:15.5px;letter-spacing:0.22px;margin-right:-0.22px;">11,453.00</span>
<span class="t" style="right:698.4000000000001px;top:458.03px;font-size:15.5px;letter-spacing:0.22px;margin-right:-0.22px;">11,796.59</span>
<span class="t" style="left:1228.6999999999998px;top:458.03px;font-size:15.5px;letter-spacing:0.934px;margin-right:-0.934px;">plus 3% inflation rate</span>
<span class="t" style="right:922.3px;top:461.13px;font-size:12.6px;letter-spacing:0.576px;margin-right:-0.576px;">11,633.40</span>
<span class="t" style="left:163.6px;top:240.6px;font-size:22.5px;font-weight:700;letter-spacing:0.063px;margin-right:-0.063px;">Supplies and Materials for Procurement in CY2022</span>
<span class="t" style="left:201.7px;top:340.83px;font-size:15.5px;font-weight:700;letter-spacing:0.423px;margin-right:-0.423px;transform:translateX(-50%);">Item Description</span>
<span class="t" style="left:408.7px;top:330.33px;font-size:15.5px;font-weight:700;letter-spacing:0.72px;margin-right:-0.72px;transform:translateX(-50%);">Unit of</span>
<span class="t" style="left:408.4px;top:352.63px;font-size:15.5px;font-weight:700;letter-spacing:0.866px;margin-right:-0.866px;transform:translateX(-50%);">Measure</span>
<span class="t" style="left:501.7px;top:341.33px;font-size:15.5px;font-weight:700;letter-spacing:0.661px;margin-right:-0.661px;transform:translateX(-50%);">Quantity</span>
<span class="t" style="left:625.9px;top:313.73px;font-size:15.5px;font-weight:700;letter-spacing:0.327px;margin-right:-0.327px;transform:translateX(-50%);">Unit Price</span>
<span class="t" style="left:756.4px;top:291.23px;font-size:15.5px;font-weight:700;letter-spacing:0.214px;margin-right:-0.214px;transform:translateX(-50%);">Total in PHP</span>
<span class="t" style="left:785.6px;top:313.73px;font-size:15.5px;font-weight:700;letter-spacing:0.923px;margin-right:-0.923px;transform:translateX(-50%);">(@60</span>
<span class="t" style="left:764.4px;top:336.43px;font-size:15.5px;font-weight:700;letter-spacing:0.314px;margin-right:-0.314px;transform:translateX(-50%);">conversion)</span>
<span class="t" style="left:878.7px;top:302.33px;font-size:15.5px;font-weight:700;letter-spacing:0.462px;margin-right:-0.462px;transform:translateX(-50%);">Total in</span>
<span class="t" style="left:875.6px;top:324.83px;font-size:15.5px;font-weight:700;letter-spacing:-0.432px;margin-right:0.432px;transform:translateX(-50%);">EURO</span>
<span class="t" style="left:687.8px;top:375.13px;font-size:15.5px;font-weight:700;letter-spacing:0.011px;margin-right:-0.011px;transform:translateX(-50%);">in PHP Currency</span>
<span class="t" style="left:877.2px;top:363.83px;font-size:15.5px;font-weight:700;transform:translateX(-50%) scaleX(0.9485);">Local</span>
<span class="t" style="left:877.2px;top:386.23px;font-size:15.5px;font-weight:700;letter-spacing:0.048px;margin-right:-0.048px;transform:translateX(-50%);">Currency</span>
<span class="t" style="left:1055.3px;top:346.23px;font-size:15.5px;letter-spacing:0.072px;margin-right:-0.072px;transform:translateX(-50%);">2020</span>
<span class="t" style="left:1055.6px;top:368.63px;font-size:15.5px;letter-spacing:1.277px;margin-right:-1.277px;transform:translateX(-50%);">Approved</span>
<span class="t" style="left:1167.5px;top:346.23px;font-size:15.5px;letter-spacing:-0.128px;margin-right:0.128px;transform:translateX(-50%);">2021</span>
<span class="t" style="left:1166.9px;top:368.63px;font-size:15.5px;letter-spacing:1.377px;margin-right:-1.377px;transform:translateX(-50%);">Approved</span>
<div style="left:1840px;top:178px;width:22px;height:802px;background:#f0f0f0"></div>
<div style="left:1840px;top:179px;width:21px;height:4px;background:#000"></div>
<div style="left:1842px;top:204px;width:18px;height:364px;background:#cdcdcd"></div>
<svg style="left:1845px;top:187px" width="11" height="8" viewBox="0 0 11 8"><path d="M1 6.5l4.5-4.5 4.5 4.5" fill="none" stroke="#505050" stroke-width="2"/></svg>
<svg style="left:1845px;top:965px" width="11" height="8" viewBox="0 0 11 8"><path d="M1 1.5l4.5 4.5 4.5-4.5" fill="none" stroke="#505050" stroke-width="2"/></svg>
<div style="left:0px;top:980px;width:1862px;height:22px;background:#f0f0f0"></div>
<div style="left:2px;top:980px;width:1112px;height:1px;background:#6f6f6f"></div>
<div style="left:1px;top:980px;width:1px;height:21px;background:#7a7a7a"></div>
<div style="left:0px;top:1001px;width:1868px;height:1px;background:#fafafa"></div>
<div style="left:0px;top:1002px;width:1920px;height:25px;background:#f0f0f0"></div>
<div style="left:4px;top:982px;width:18.5px;height:18px;background:#c9c9c9"></div>
<div style="left:25px;top:982px;width:18.5px;height:18px;background:#c9c9c9"></div>
<div style="left:46px;top:982px;width:18.5px;height:18px;background:#c9c9c9"></div>
<div style="left:67.5px;top:982px;width:18.5px;height:18px;background:#c9c9c9"></div>
<svg style="left:4px;top:982px" width="84" height="18" viewBox="0 0 84 18"><g fill="#eaeaea"><rect x="5" y="4" width="2" height="9"/><polygon points="14,4 14,13 8,8.5"/><polygon points="34,4 34,13 28,8.5"/><polygon points="49,4 49,13 55,8.5"/><polygon points="70,4 70,13 76,8.5"/><rect x="77" y="4" width="2" height="9"/></g></svg>
<svg style="left:86px;top:980px" width="110" height="22" viewBox="86 980 110 22"><polygon points="87.5,981 134,981 141,1000 96.5,1000" fill="#efefef" stroke="#4d4d4d" stroke-width="1"/><polygon points="133,980 191.5,980 183.5,1000.5 141,1000.5" fill="#fcfcfc"/><path d="M134,981 L141.5,1000.5 L183.5,1000.5 L191.5,980.5" fill="none" stroke="#333" stroke-width="1.2"/><path d="M96.5,1001 H138 M141.5,1001.5 H183" stroke="#8d8d8d" stroke-width="1"/></svg>
<span class="t" style="left:115.6px;top:990.95px;font-size:14px;color:#111;transform:translateX(-50%) scaleX(0.9212);">2021</span>
<span class="t" style="left:162.4px;top:990.85px;font-size:14.3px;font-weight:700;letter-spacing:0.562px;margin-right:-0.562px;transform:translateX(-50%);">2022</span>
<div style="left:1113px;top:980px;width:8px;height:21px;background:#fff;border:1px solid #6b6b6b;border-top:none;box-sizing:border-box;border-left:2px solid #6b6b6b"></div>
<svg style="left:1127px;top:985px" width="9" height="11" viewBox="0 0 9 11"><path d="M7 1l-5 4.5 5 4.5" fill="none" stroke="#505050" stroke-width="2"/></svg>
<svg style="left:1821px;top:985px" width="9" height="11" viewBox="0 0 9 11"><path d="M2 1l5 4.5-5 4.5" fill="none" stroke="#505050" stroke-width="2"/></svg>
<div style="left:1141px;top:982px;width:319px;height:18px;background:#cdcdcd"></div>
<div style="left:1836px;top:980px;width:4px;height:21px;background:#000"></div>
<div style="left:503px;top:1007px;width:1px;height:20px;background:#a3a3a3"></div>
<div style="left:504px;top:1007px;width:1px;height:20px;background:#fbfbfb"></div>
<div style="left:1032px;top:1007px;width:1px;height:20px;background:#a3a3a3"></div>
<div style="left:1033px;top:1007px;width:1px;height:20px;background:#fbfbfb"></div>
<div style="left:1099px;top:1007px;width:1px;height:20px;background:#a3a3a3"></div>
<div style="left:1100px;top:1007px;width:1px;height:20px;background:#fbfbfb"></div>
<div style="left:1140px;top:1007px;width:1px;height:20px;background:#a3a3a3"></div>
<div style="left:1141px;top:1007px;width:1px;height:20px;background:#fbfbfb"></div>
<div style="left:1160px;top:1007px;width:1px;height:20px;background:#a3a3a3"></div>
<div style="left:1161px;top:1007px;width:1px;height:20px;background:#fbfbfb"></div>
<div style="left:1197px;top:1007px;width:1px;height:20px;background:#a3a3a3"></div>
<div style="left:1198px;top:1007px;width:1px;height:20px;background:#fbfbfb"></div>
<div style="left:1671px;top:1007px;width:1px;height:20px;background:#a3a3a3"></div>
<div style="left:1672px;top:1007px;width:1px;height:20px;background:#fbfbfb"></div>
<div style="left:1863px;top:1007px;width:1px;height:20px;background:#a3a3a3"></div>
<div style="left:1864px;top:1007px;width:1px;height:20px;background:#fbfbfb"></div>
<span class="t" style="left:13px;top:1018.38px;font-size:14.5px;color:#111;letter-spacing:-0.184px;margin-right:0.184px;">Sheet 2 / 2</span>
<span class="t" style="left:510.5px;top:1018.38px;font-size:14.5px;color:#111;transform:scaleX(0.935);transform-origin:0 50%;">PageStyle_2022</span>
<span class="t" style="left:1105.5px;top:1018.18px;font-size:14.5px;color:#111;transform:scaleX(0.831);transform-origin:0 50%;">STD</span>
<span class="t" style="left:1146.5px;top:1019.48px;font-size:14.5px;color:#111;">*</span>
<span class="t" style="left:1409px;top:1018.38px;font-size:14.5px;color:#111;letter-spacing:0.235px;margin-right:-0.235px;">Sum=0</span>
<span class="t" style="left:1870px;top:1018.38px;font-size:14.5px;color:#111;transform:scaleX(0.9216);transform-origin:0 50%;">100 %</span>
<svg style="left:1676px;top:1006px" width="180" height="21" viewBox="1676 1006 180 21"><defs><radialGradient id="zg" cx=".4" cy=".35" r=".7"><stop offset="0" stop-color="#e9f2fa"/><stop offset="1" stop-color="#9db9d6"/></radialGradient></defs><path d="M1699 1016.5H1832" stroke="#8a8a8a" stroke-width="1.6"/><path d="M1699.5 1016v4" stroke="#8a8a8a"/><path d="M1764.5 1010v4" stroke="#555" stroke-width="1"/><circle cx="1685.5" cy="1018" r="6.3" fill="url(#zg)" stroke="#44607f" stroke-width="1.2"/><path d="M1682.3 1018h6.4" stroke="#26466b" stroke-width="1.6"/><circle cx="1845.6" cy="1018" r="6.3" fill="url(#zg)" stroke="#44607f" stroke-width="1.2"/><path d="M1842.4 1018h6.4M1845.6 1014.8v6.4" stroke="#26466b" stroke-width="1.6"/><path d="M1760 1015.8q0-2.800 4.200-2.800t4.200 2.800v2.700q0 3.500-4.200 4.800-4.200-1.300-4.200-4.800z" fill="#6a8fb8" stroke="#2f4f73" stroke-width="1"/></svg>
</body></html>
